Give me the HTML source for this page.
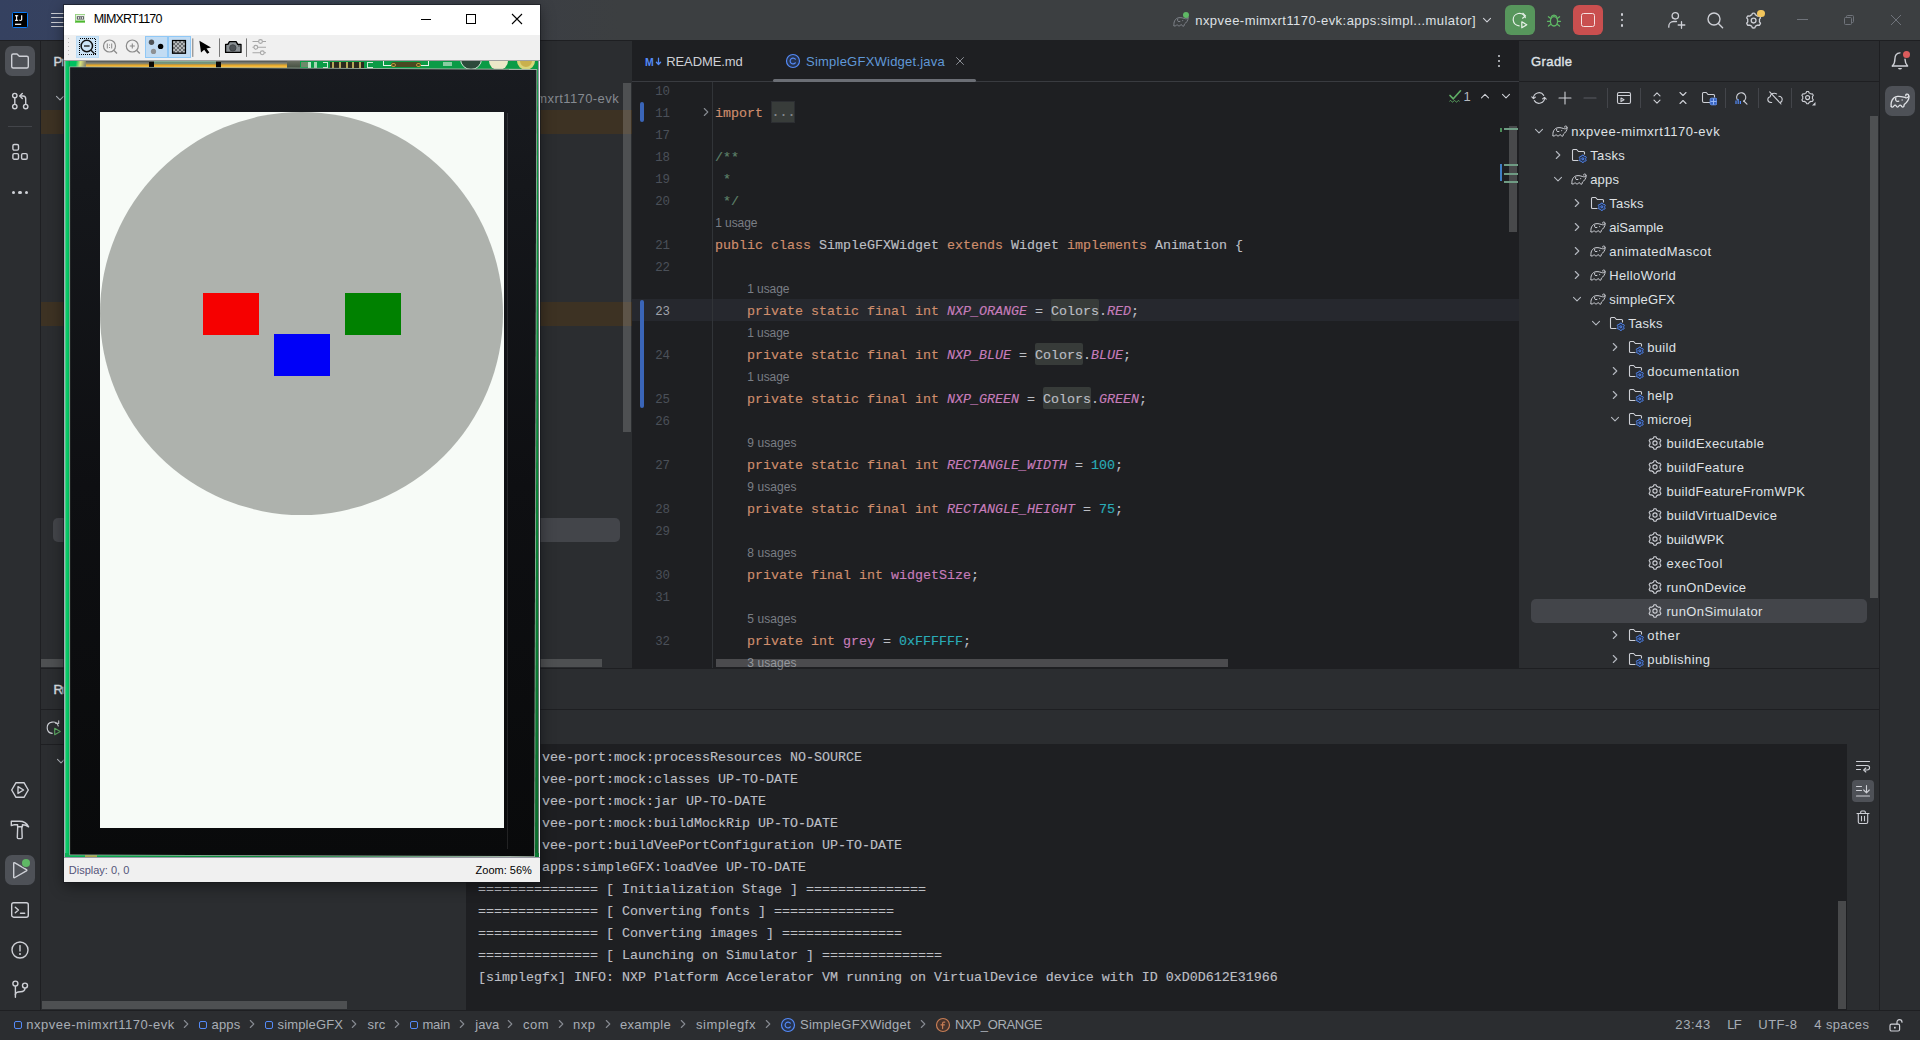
<!DOCTYPE html>
<html>
<head>
<meta charset="utf-8">
<title>IDE</title>
<style>
*{box-sizing:border-box;margin:0;padding:0}
html,body{width:1920px;height:1040px;overflow:hidden;background:#2b2d30;font-family:"Liberation Sans",sans-serif;font-size:13px;color:#dfe1e5}
.abs{position:absolute}
#root{position:absolute;left:0;top:0;width:1920px;height:1040px;overflow:hidden;background:#2b2d30}
/* top bar */
#topbar{left:0;top:0;width:1920px;height:40px;background:linear-gradient(90deg,#354160 0px,#37425e 120px,#39404f 360px,#3b3e44 520px,#3c3f41 620px,#3c3f41 1920px)}
#topline{left:0;top:40px;width:1920px;height:1px;background:#1e1f22}
/* left stripe */
#lstripe{left:0;top:41px;width:40px;height:969px;background:#2b2d30}
#lstripeb{left:40px;top:41px;width:1px;height:969px;background:#1e1f22}
/* right stripe */
#rstripe{left:1880px;top:41px;width:40px;height:969px;background:#2b2d30}
#rstripeb{left:1879px;top:41px;width:1px;height:969px;background:#1e1f22}
/* project panel */
#proj{left:41px;top:41px;width:591px;height:627px;background:#2b2d30}
/* editor */
#editor{left:632px;top:41px;width:887px;height:627px;background:#1e1f22;overflow:hidden}
/* gradle */
#gradle{left:1519px;top:41px;width:360px;height:627px;background:#2b2d30;overflow:hidden}
/* bottom */
#bottom{left:41px;top:668px;width:1838px;height:342px;background:#2b2d30;overflow:hidden}
#bottomtop{left:41px;top:668px;width:1838px;height:1px;background:#1e1f22}
/* status */
#status{left:0;top:1010px;width:1920px;height:30px;background:#2b2d30;border-top:1px solid #1e1f22}
.t{position:absolute;white-space:pre}
.mono{font-family:"Liberation Mono",monospace}
</style>
</head>
<body>
<div id="root">
<div id="topbar" class="abs"></div>
<div id="topline" class="abs"></div>
<div id="lstripe" class="abs"></div>
<div id="lstripeb" class="abs"></div>
<div id="proj" class="abs"></div>
<div id="editor" class="abs"></div>
<div id="gradle" class="abs"></div>
<div id="rstripe" class="abs"></div>
<div id="rstripeb" class="abs"></div>
<div id="bottom" class="abs"></div>
<div id="bottomtop" class="abs"></div>
<div id="status" class="abs"></div>
<div class="t" style="left:53.6px;top:52.7px;font-size:13px;line-height:17px;color:#dfe1e5;-webkit-text-stroke:0.4px #dfe1e5;">P</div>
<div class="t" style="left:61.6px;top:52.7px;font-size:13px;line-height:17px;color:#dfe1e5;-webkit-text-stroke:0.4px #dfe1e5;">roject</div>
<svg class="abs" style="left:52px;top:90px;" width="16" height="16" viewBox="0 0 16 16"><path d="M4.5 6.3L8 9.8L11.5 6.3" fill="none" stroke="#b4b8bf" stroke-width="1.1" stroke-linecap="round" stroke-linejoin="round"/></svg>
<div class="abs" style="left:41px;top:110px;width:591px;height:24px;background:#3d3223;"></div>
<div class="abs" style="left:41px;top:302px;width:591px;height:24px;background:#3d3223;"></div>
<div class="t" style="left:536.3px;top:89.9px;font-size:13px;line-height:17px;color:#868a91;letter-spacing:0.418px;">mxrt1170-evk</div>
<div class="abs" style="left:53px;top:518px;width:567px;height:24px;background:#43454a;border-radius:5px"></div>
<div class="abs" style="left:623px;top:83px;width:8px;height:349px;background:rgba(255,255,255,0.17);"></div>
<div class="abs" style="left:41px;top:659px;width:561px;height:8px;background:rgba(255,255,255,0.17);"></div>
<div class="t" style="left:53.6px;top:680.6px;font-size:13px;line-height:17px;color:#dfe1e5;-webkit-text-stroke:0.4px #dfe1e5;">R</div>
<div class="t" style="left:61.7px;top:680.6px;font-size:13px;line-height:17px;color:#dfe1e5;-webkit-text-stroke:0.4px #dfe1e5;">un</div>
<div class="abs" style="left:41px;top:709px;width:1838px;height:1px;background:#1e1f22;"></div>
<div class="abs" style="left:41px;top:744px;width:425px;height:1px;background:#1e1f22;"></div>
<svg class="abs" style="left:46px;top:719.5px;" width="16" height="16" viewBox="0 0 16 16"><g fill="none" stroke="#ced0d6" stroke-width="1.1" stroke-linecap="round" stroke-linejoin="round"><path d="M6.2 13.4A5.7 5.7 0 1 1 12.3 6"/><path d="M9.8 3.4H12.7V0.8"/></g><path d="M8.7 8.3L14.3 11.5L8.7 14.7Z" fill="none" stroke="#5fad65" stroke-width="1.1" stroke-linejoin="round"/></svg>
<svg class="abs" style="left:52.5px;top:753px;" width="16" height="16" viewBox="0 0 16 16"><path d="M4.5 6.3L8 9.8L11.5 6.3" fill="none" stroke="#b4b8bf" stroke-width="1.1" stroke-linecap="round" stroke-linejoin="round"/></svg>
<div class="abs" style="left:466px;top:744px;width:1381px;height:266px;background:#1e1f22;"></div>
<div class="t" style="left:478px;top:749.28px;font-size:13.33px;line-height:17px;color:#bcbec4;font-family:'Liberation Mono',monospace;-webkit-text-stroke:0.15px #bcbec4;">&gt; Task :vee-port:mock:processResources NO-SOURCE</div>
<div class="t" style="left:478px;top:771.28px;font-size:13.33px;line-height:17px;color:#bcbec4;font-family:'Liberation Mono',monospace;-webkit-text-stroke:0.15px #bcbec4;">&gt; Task :vee-port:mock:classes UP-TO-DATE</div>
<div class="t" style="left:478px;top:793.28px;font-size:13.33px;line-height:17px;color:#bcbec4;font-family:'Liberation Mono',monospace;-webkit-text-stroke:0.15px #bcbec4;">&gt; Task :vee-port:mock:jar UP-TO-DATE</div>
<div class="t" style="left:478px;top:815.28px;font-size:13.33px;line-height:17px;color:#bcbec4;font-family:'Liberation Mono',monospace;-webkit-text-stroke:0.15px #bcbec4;">&gt; Task :vee-port:mock:buildMockRip UP-TO-DATE</div>
<div class="t" style="left:478px;top:837.28px;font-size:13.33px;line-height:17px;color:#bcbec4;font-family:'Liberation Mono',monospace;-webkit-text-stroke:0.15px #bcbec4;">&gt; Task :vee-port:buildVeePortConfiguration UP-TO-DATE</div>
<div class="t" style="left:478px;top:859.28px;font-size:13.33px;line-height:17px;color:#bcbec4;font-family:'Liberation Mono',monospace;-webkit-text-stroke:0.15px #bcbec4;">&gt; Task :apps:simpleGFX:loadVee UP-TO-DATE</div>
<div class="t" style="left:478px;top:881.28px;font-size:13.33px;line-height:17px;color:#bcbec4;font-family:'Liberation Mono',monospace;-webkit-text-stroke:0.15px #bcbec4;">=============== [ Initialization Stage ] ===============</div>
<div class="t" style="left:478px;top:903.28px;font-size:13.33px;line-height:17px;color:#bcbec4;font-family:'Liberation Mono',monospace;-webkit-text-stroke:0.15px #bcbec4;">=============== [ Converting fonts ] ===============</div>
<div class="t" style="left:478px;top:925.28px;font-size:13.33px;line-height:17px;color:#bcbec4;font-family:'Liberation Mono',monospace;-webkit-text-stroke:0.15px #bcbec4;">=============== [ Converting images ] ===============</div>
<div class="t" style="left:478px;top:947.28px;font-size:13.33px;line-height:17px;color:#bcbec4;font-family:'Liberation Mono',monospace;-webkit-text-stroke:0.15px #bcbec4;">=============== [ Launching on Simulator ] ===============</div>
<div class="t" style="left:478px;top:969.28px;font-size:13.33px;line-height:17px;color:#bcbec4;font-family:'Liberation Mono',monospace;-webkit-text-stroke:0.15px #bcbec4;">[simplegfx] INFO: NXP Platform Accelerator VM running on VirtualDevice device with ID 0xD0D612E31966</div>
<div class="abs" style="left:1838px;top:901px;width:8px;height:108px;background:rgba(255,255,255,0.19);"></div>
<div class="abs" style="left:42px;top:1001px;width:304.5px;height:7.5px;background:rgba(255,255,255,0.17);"></div>
<svg class="abs" style="left:1855px;top:757.5px;" width="16" height="16" viewBox="0 0 16 16"><g fill="none" stroke="#ced0d6" stroke-width="1.1" stroke-linecap="round" stroke-linejoin="round"><path d="M1.5 3.5H14.5"/><path d="M1.5 7.5H12Q14.6 7.5 14.6 9.8Q14.6 12 12 12H9"/><path d="M10.8 10L8.8 12L10.8 14"/><path d="M1.5 11.5H5.5"/></g></svg>
<div class="abs" style="left:1852px;top:780px;width:22px;height:22px;background:#4e5157;border-radius:4px"></div>
<svg class="abs" style="left:1855px;top:783px;" width="16" height="16" viewBox="0 0 16 16"><g fill="none" stroke="#ced0d6" stroke-width="1.1" stroke-linecap="round" stroke-linejoin="round"><path d="M1.5 3.5H6.5M1.5 7.5H6.5M1.5 13H14.5"/><path d="M11.5 2.5V9.5M8.7 7L11.5 9.8L14.3 7"/></g></svg>
<svg class="abs" style="left:1855px;top:808.5px;" width="16" height="16" viewBox="0 0 16 16"><g fill="none" stroke="#ced0d6" stroke-width="1.1" stroke-linecap="round" stroke-linejoin="round"><path d="M2 4.5H14"/><path d="M5.7 4.3V3Q5.7 2 6.7 2H9.3Q10.3 2 10.3 3V4.3"/><path d="M3.3 4.7V13Q3.3 14.5 4.8 14.5H11.2Q12.7 14.5 12.7 13V4.7"/><path d="M6.5 7.2V11.8M9.5 7.2V11.8"/></g></svg>
<div class="abs" style="left:632px;top:81px;width:887px;height:1px;background:#393b40;"></div>
<div class="t" style="left:645px;top:54.86px;font-size:10.5px;line-height:14px;color:#548af7;font-weight:bold;">M</div>
<svg class="abs" style="left:654.5px;top:56px;" width="7" height="11" viewBox="0 0 7 11"><path d="M3.5 2.2V8.3M1.4 6.2L3.5 8.5L5.6 6.2" fill="none" stroke="#548af7" stroke-width="1.3" stroke-linecap="round" stroke-linejoin="round"/></svg>
<div class="t" style="left:666.2px;top:52.7px;font-size:13px;line-height:17px;color:#ced0d6;letter-spacing:-0.088px;">README.md</div>
<svg class="abs" style="left:785px;top:53px;" width="16" height="16" viewBox="0 0 16 16"><circle cx="8" cy="8" r="6.5" fill="#25324d" stroke="#548af7" stroke-width="1.2"/><path d="M10.3 6.2A2.9 2.9 0 1 0 10.3 9.8" fill="none" stroke="#548af7" stroke-width="1.2" stroke-linecap="round"/></svg>
<div class="t" style="left:806px;top:52.7px;font-size:13px;line-height:17px;color:#6098d8;letter-spacing:0.231px;">SimpleGFXWidget.java</div>
<svg class="abs" style="left:953px;top:54px;" width="14" height="14" viewBox="0 0 14 14"><path d="M3.5 3.5L10.5 10.5M10.5 3.5L3.5 10.5" stroke="#8b8e95" stroke-width="1" fill="none" stroke-linecap="round"/></svg>
<div class="abs" style="left:773px;top:78.6px;width:203px;height:3px;background:#6b6e75;border-radius:1.5px"></div>
<div class="abs" style="left:1497.8px;top:55px;width:2.4px;height:2.4px;border-radius:50%;background:#ced0d6"></div>
<div class="abs" style="left:1497.8px;top:60px;width:2.4px;height:2.4px;border-radius:50%;background:#ced0d6"></div>
<div class="abs" style="left:1497.8px;top:65px;width:2.4px;height:2.4px;border-radius:50%;background:#ced0d6"></div>
<div class="abs" style="left:632px;top:299px;width:887px;height:22px;background:#26282e;"></div>
<div class="abs" style="left:712px;top:82px;width:1px;height:586px;background:#313438;"></div>
<div class="abs" style="left:640.2px;top:102px;width:3.9px;height:20px;background:#3a65b8;border-radius:2px"></div>
<div class="abs" style="left:640.2px;top:300px;width:3.9px;height:108px;background:#3a65b8;border-radius:2px"></div>
<svg class="abs" style="left:697.8px;top:104.4px;" width="16" height="16" viewBox="0 0 16 16"><path d="M6.3 4.5L9.8 8L6.3 11.5" fill="none" stroke="#868a91" stroke-width="1.1" stroke-linecap="round" stroke-linejoin="round"/></svg>
<div class="t" style="left:655.2px;top:84.1px;font-size:12.4px;line-height:16px;color:#4b5059;font-family:'Liberation Mono',monospace;">10</div>
<div class="t" style="left:655.2px;top:106.1px;font-size:12.4px;line-height:16px;color:#4b5059;font-family:'Liberation Mono',monospace;">11</div>
<div class="t" style="left:655.2px;top:128.1px;font-size:12.4px;line-height:16px;color:#4b5059;font-family:'Liberation Mono',monospace;">17</div>
<div class="t" style="left:655.2px;top:150.1px;font-size:12.4px;line-height:16px;color:#4b5059;font-family:'Liberation Mono',monospace;">18</div>
<div class="t" style="left:655.2px;top:172.1px;font-size:12.4px;line-height:16px;color:#4b5059;font-family:'Liberation Mono',monospace;">19</div>
<div class="t" style="left:655.2px;top:194.1px;font-size:12.4px;line-height:16px;color:#4b5059;font-family:'Liberation Mono',monospace;">20</div>
<div class="t" style="left:655.2px;top:238.1px;font-size:12.4px;line-height:16px;color:#4b5059;font-family:'Liberation Mono',monospace;">21</div>
<div class="t" style="left:655.2px;top:260.1px;font-size:12.4px;line-height:16px;color:#4b5059;font-family:'Liberation Mono',monospace;">22</div>
<div class="t" style="left:655.2px;top:304.1px;font-size:12.4px;line-height:16px;color:#a1a3ab;font-family:'Liberation Mono',monospace;">23</div>
<div class="t" style="left:655.2px;top:348.1px;font-size:12.4px;line-height:16px;color:#4b5059;font-family:'Liberation Mono',monospace;">24</div>
<div class="t" style="left:655.2px;top:392.1px;font-size:12.4px;line-height:16px;color:#4b5059;font-family:'Liberation Mono',monospace;">25</div>
<div class="t" style="left:655.2px;top:414.1px;font-size:12.4px;line-height:16px;color:#4b5059;font-family:'Liberation Mono',monospace;">26</div>
<div class="t" style="left:655.2px;top:458.1px;font-size:12.4px;line-height:16px;color:#4b5059;font-family:'Liberation Mono',monospace;">27</div>
<div class="t" style="left:655.2px;top:502.1px;font-size:12.4px;line-height:16px;color:#4b5059;font-family:'Liberation Mono',monospace;">28</div>
<div class="t" style="left:655.2px;top:524.1px;font-size:12.4px;line-height:16px;color:#4b5059;font-family:'Liberation Mono',monospace;">29</div>
<div class="t" style="left:655.2px;top:568.1px;font-size:12.4px;line-height:16px;color:#4b5059;font-family:'Liberation Mono',monospace;">30</div>
<div class="t" style="left:655.2px;top:590.1px;font-size:12.4px;line-height:16px;color:#4b5059;font-family:'Liberation Mono',monospace;">31</div>
<div class="t" style="left:655.2px;top:634.1px;font-size:12.4px;line-height:16px;color:#4b5059;font-family:'Liberation Mono',monospace;">32</div>
<div class="t" style="left:715.3px;top:215.14px;font-size:12px;line-height:16px;color:#7a7e85;letter-spacing:-0.101px;">1 usage</div>
<div class="t" style="left:747.3px;top:281.14px;font-size:12px;line-height:16px;color:#7a7e85;letter-spacing:-0.101px;">1 usage</div>
<div class="t" style="left:747.3px;top:325.14px;font-size:12px;line-height:16px;color:#7a7e85;letter-spacing:-0.101px;">1 usage</div>
<div class="t" style="left:747.3px;top:369.14px;font-size:12px;line-height:16px;color:#7a7e85;letter-spacing:-0.101px;">1 usage</div>
<div class="t" style="left:747.3px;top:435.14px;font-size:12px;line-height:16px;color:#7a7e85;letter-spacing:0.087px;">9 usages</div>
<div class="t" style="left:747.3px;top:479.14px;font-size:12px;line-height:16px;color:#7a7e85;letter-spacing:0.087px;">9 usages</div>
<div class="t" style="left:747.3px;top:545.14px;font-size:12px;line-height:16px;color:#7a7e85;letter-spacing:0.087px;">8 usages</div>
<div class="t" style="left:747.3px;top:611.14px;font-size:12px;line-height:16px;color:#7a7e85;letter-spacing:0.087px;">5 usages</div>
<div class="t" style="left:747.3px;top:655.14px;font-size:12px;line-height:16px;color:#7a7e85;letter-spacing:0.087px;">3 usages</div>
<div class="t" style="left:715px;top:104.88px;font-size:13.33px;line-height:17px;color:#cf8e6d;font-family:'Liberation Mono',monospace;-webkit-text-stroke:0.15px #cf8e6d;">import</div>
<div class="abs" style="left:771px;top:101px;width:24px;height:21.5px;background:#383c3a;border:1px solid #2c2e32"></div>
<div class="t" style="left:771.5px;top:104.48px;font-size:13.33px;line-height:17px;color:#868a91;font-family:'Liberation Mono',monospace;-webkit-text-stroke:0.15px #868a91;">...</div>
<div class="t" style="left:715px;top:148.88px;font-size:13.33px;line-height:17px;color:#5f826b;font-family:'Liberation Mono',monospace;-webkit-text-stroke:0.15px #5f826b;">/**</div>
<div class="t" style="left:723px;top:170.88px;font-size:13.33px;line-height:17px;color:#5f826b;font-family:'Liberation Mono',monospace;-webkit-text-stroke:0.15px #5f826b;">*</div>
<div class="t" style="left:723px;top:192.88px;font-size:13.33px;line-height:17px;color:#5f826b;font-family:'Liberation Mono',monospace;-webkit-text-stroke:0.15px #5f826b;">*/</div>
<div class="t" style="left:715px;top:236.88px;font-size:13.33px;line-height:17px;color:#cf8e6d;font-family:'Liberation Mono',monospace;-webkit-text-stroke:0.15px #cf8e6d;">public</div>
<div class="t" style="left:771px;top:236.88px;font-size:13.33px;line-height:17px;color:#cf8e6d;font-family:'Liberation Mono',monospace;-webkit-text-stroke:0.15px #cf8e6d;">class</div>
<div class="t" style="left:819px;top:236.88px;font-size:13.33px;line-height:17px;color:#bcbec4;font-family:'Liberation Mono',monospace;-webkit-text-stroke:0.15px #bcbec4;">SimpleGFXWidget</div>
<div class="t" style="left:947px;top:236.88px;font-size:13.33px;line-height:17px;color:#cf8e6d;font-family:'Liberation Mono',monospace;-webkit-text-stroke:0.15px #cf8e6d;">extends</div>
<div class="t" style="left:1011px;top:236.88px;font-size:13.33px;line-height:17px;color:#bcbec4;font-family:'Liberation Mono',monospace;-webkit-text-stroke:0.15px #bcbec4;">Widget</div>
<div class="t" style="left:1067px;top:236.88px;font-size:13.33px;line-height:17px;color:#cf8e6d;font-family:'Liberation Mono',monospace;-webkit-text-stroke:0.15px #cf8e6d;">implements</div>
<div class="t" style="left:1155px;top:236.88px;font-size:13.33px;line-height:17px;color:#bcbec4;font-family:'Liberation Mono',monospace;-webkit-text-stroke:0.15px #bcbec4;">Animation {</div>
<div class="t" style="left:747px;top:302.88px;font-size:13.33px;line-height:17px;color:#cf8e6d;font-family:'Liberation Mono',monospace;-webkit-text-stroke:0.15px #cf8e6d;">private</div>
<div class="t" style="left:811px;top:302.88px;font-size:13.33px;line-height:17px;color:#cf8e6d;font-family:'Liberation Mono',monospace;-webkit-text-stroke:0.15px #cf8e6d;">static</div>
<div class="t" style="left:867px;top:302.88px;font-size:13.33px;line-height:17px;color:#cf8e6d;font-family:'Liberation Mono',monospace;-webkit-text-stroke:0.15px #cf8e6d;">final</div>
<div class="t" style="left:915px;top:302.88px;font-size:13.33px;line-height:17px;color:#cf8e6d;font-family:'Liberation Mono',monospace;-webkit-text-stroke:0.15px #cf8e6d;">int</div>
<div class="t" style="left:947px;top:302.88px;font-size:13.33px;line-height:17px;color:#c77dbb;font-family:'Liberation Mono',monospace;-webkit-text-stroke:0.15px #c77dbb;font-style:italic;">NXP_ORANGE</div>
<div class="t" style="left:1035px;top:302.88px;font-size:13.33px;line-height:17px;color:#bcbec4;font-family:'Liberation Mono',monospace;-webkit-text-stroke:0.15px #bcbec4;">=</div>
<div class="abs" style="left:1051px;top:299px;width:48px;height:22px;background:#373b39;border-radius:2px"></div>
<div class="t" style="left:1051px;top:302.88px;font-size:13.33px;line-height:17px;color:#bcbec4;font-family:'Liberation Mono',monospace;-webkit-text-stroke:0.15px #bcbec4;">Colors</div>
<div class="t" style="left:1099px;top:302.88px;font-size:13.33px;line-height:17px;color:#bcbec4;font-family:'Liberation Mono',monospace;-webkit-text-stroke:0.15px #bcbec4;">.</div>
<div class="t" style="left:1107px;top:302.88px;font-size:13.33px;line-height:17px;color:#c77dbb;font-family:'Liberation Mono',monospace;-webkit-text-stroke:0.15px #c77dbb;font-style:italic;">RED</div>
<div class="t" style="left:1131px;top:302.88px;font-size:13.33px;line-height:17px;color:#bcbec4;font-family:'Liberation Mono',monospace;-webkit-text-stroke:0.15px #bcbec4;">;</div>
<div class="t" style="left:747px;top:346.88px;font-size:13.33px;line-height:17px;color:#cf8e6d;font-family:'Liberation Mono',monospace;-webkit-text-stroke:0.15px #cf8e6d;">private</div>
<div class="t" style="left:811px;top:346.88px;font-size:13.33px;line-height:17px;color:#cf8e6d;font-family:'Liberation Mono',monospace;-webkit-text-stroke:0.15px #cf8e6d;">static</div>
<div class="t" style="left:867px;top:346.88px;font-size:13.33px;line-height:17px;color:#cf8e6d;font-family:'Liberation Mono',monospace;-webkit-text-stroke:0.15px #cf8e6d;">final</div>
<div class="t" style="left:915px;top:346.88px;font-size:13.33px;line-height:17px;color:#cf8e6d;font-family:'Liberation Mono',monospace;-webkit-text-stroke:0.15px #cf8e6d;">int</div>
<div class="t" style="left:947px;top:346.88px;font-size:13.33px;line-height:17px;color:#c77dbb;font-family:'Liberation Mono',monospace;-webkit-text-stroke:0.15px #c77dbb;font-style:italic;">NXP_BLUE</div>
<div class="t" style="left:1019px;top:346.88px;font-size:13.33px;line-height:17px;color:#bcbec4;font-family:'Liberation Mono',monospace;-webkit-text-stroke:0.15px #bcbec4;">=</div>
<div class="abs" style="left:1035px;top:343px;width:48px;height:22px;background:#373b39;border-radius:2px"></div>
<div class="t" style="left:1035px;top:346.88px;font-size:13.33px;line-height:17px;color:#bcbec4;font-family:'Liberation Mono',monospace;-webkit-text-stroke:0.15px #bcbec4;">Colors</div>
<div class="t" style="left:1083px;top:346.88px;font-size:13.33px;line-height:17px;color:#bcbec4;font-family:'Liberation Mono',monospace;-webkit-text-stroke:0.15px #bcbec4;">.</div>
<div class="t" style="left:1091px;top:346.88px;font-size:13.33px;line-height:17px;color:#c77dbb;font-family:'Liberation Mono',monospace;-webkit-text-stroke:0.15px #c77dbb;font-style:italic;">BLUE</div>
<div class="t" style="left:1123px;top:346.88px;font-size:13.33px;line-height:17px;color:#bcbec4;font-family:'Liberation Mono',monospace;-webkit-text-stroke:0.15px #bcbec4;">;</div>
<div class="t" style="left:747px;top:390.88px;font-size:13.33px;line-height:17px;color:#cf8e6d;font-family:'Liberation Mono',monospace;-webkit-text-stroke:0.15px #cf8e6d;">private</div>
<div class="t" style="left:811px;top:390.88px;font-size:13.33px;line-height:17px;color:#cf8e6d;font-family:'Liberation Mono',monospace;-webkit-text-stroke:0.15px #cf8e6d;">static</div>
<div class="t" style="left:867px;top:390.88px;font-size:13.33px;line-height:17px;color:#cf8e6d;font-family:'Liberation Mono',monospace;-webkit-text-stroke:0.15px #cf8e6d;">final</div>
<div class="t" style="left:915px;top:390.88px;font-size:13.33px;line-height:17px;color:#cf8e6d;font-family:'Liberation Mono',monospace;-webkit-text-stroke:0.15px #cf8e6d;">int</div>
<div class="t" style="left:947px;top:390.88px;font-size:13.33px;line-height:17px;color:#c77dbb;font-family:'Liberation Mono',monospace;-webkit-text-stroke:0.15px #c77dbb;font-style:italic;">NXP_GREEN</div>
<div class="t" style="left:1027px;top:390.88px;font-size:13.33px;line-height:17px;color:#bcbec4;font-family:'Liberation Mono',monospace;-webkit-text-stroke:0.15px #bcbec4;">=</div>
<div class="abs" style="left:1043px;top:387px;width:48px;height:22px;background:#373b39;border-radius:2px"></div>
<div class="t" style="left:1043px;top:390.88px;font-size:13.33px;line-height:17px;color:#bcbec4;font-family:'Liberation Mono',monospace;-webkit-text-stroke:0.15px #bcbec4;">Colors</div>
<div class="t" style="left:1091px;top:390.88px;font-size:13.33px;line-height:17px;color:#bcbec4;font-family:'Liberation Mono',monospace;-webkit-text-stroke:0.15px #bcbec4;">.</div>
<div class="t" style="left:1099px;top:390.88px;font-size:13.33px;line-height:17px;color:#c77dbb;font-family:'Liberation Mono',monospace;-webkit-text-stroke:0.15px #c77dbb;font-style:italic;">GREEN</div>
<div class="t" style="left:1139px;top:390.88px;font-size:13.33px;line-height:17px;color:#bcbec4;font-family:'Liberation Mono',monospace;-webkit-text-stroke:0.15px #bcbec4;">;</div>
<div class="t" style="left:747px;top:456.88px;font-size:13.33px;line-height:17px;color:#cf8e6d;font-family:'Liberation Mono',monospace;-webkit-text-stroke:0.15px #cf8e6d;">private</div>
<div class="t" style="left:811px;top:456.88px;font-size:13.33px;line-height:17px;color:#cf8e6d;font-family:'Liberation Mono',monospace;-webkit-text-stroke:0.15px #cf8e6d;">static</div>
<div class="t" style="left:867px;top:456.88px;font-size:13.33px;line-height:17px;color:#cf8e6d;font-family:'Liberation Mono',monospace;-webkit-text-stroke:0.15px #cf8e6d;">final</div>
<div class="t" style="left:915px;top:456.88px;font-size:13.33px;line-height:17px;color:#cf8e6d;font-family:'Liberation Mono',monospace;-webkit-text-stroke:0.15px #cf8e6d;">int</div>
<div class="t" style="left:947px;top:456.88px;font-size:13.33px;line-height:17px;color:#c77dbb;font-family:'Liberation Mono',monospace;-webkit-text-stroke:0.15px #c77dbb;font-style:italic;">RECTANGLE_WIDTH</div>
<div class="t" style="left:1075px;top:456.88px;font-size:13.33px;line-height:17px;color:#bcbec4;font-family:'Liberation Mono',monospace;-webkit-text-stroke:0.15px #bcbec4;">=</div>
<div class="t" style="left:1091px;top:456.88px;font-size:13.33px;line-height:17px;color:#2aacb8;font-family:'Liberation Mono',monospace;-webkit-text-stroke:0.15px #2aacb8;">100</div>
<div class="t" style="left:1115px;top:456.88px;font-size:13.33px;line-height:17px;color:#bcbec4;font-family:'Liberation Mono',monospace;-webkit-text-stroke:0.15px #bcbec4;">;</div>
<div class="t" style="left:747px;top:500.88px;font-size:13.33px;line-height:17px;color:#cf8e6d;font-family:'Liberation Mono',monospace;-webkit-text-stroke:0.15px #cf8e6d;">private</div>
<div class="t" style="left:811px;top:500.88px;font-size:13.33px;line-height:17px;color:#cf8e6d;font-family:'Liberation Mono',monospace;-webkit-text-stroke:0.15px #cf8e6d;">static</div>
<div class="t" style="left:867px;top:500.88px;font-size:13.33px;line-height:17px;color:#cf8e6d;font-family:'Liberation Mono',monospace;-webkit-text-stroke:0.15px #cf8e6d;">final</div>
<div class="t" style="left:915px;top:500.88px;font-size:13.33px;line-height:17px;color:#cf8e6d;font-family:'Liberation Mono',monospace;-webkit-text-stroke:0.15px #cf8e6d;">int</div>
<div class="t" style="left:947px;top:500.88px;font-size:13.33px;line-height:17px;color:#c77dbb;font-family:'Liberation Mono',monospace;-webkit-text-stroke:0.15px #c77dbb;font-style:italic;">RECTANGLE_HEIGHT</div>
<div class="t" style="left:1083px;top:500.88px;font-size:13.33px;line-height:17px;color:#bcbec4;font-family:'Liberation Mono',monospace;-webkit-text-stroke:0.15px #bcbec4;">=</div>
<div class="t" style="left:1099px;top:500.88px;font-size:13.33px;line-height:17px;color:#2aacb8;font-family:'Liberation Mono',monospace;-webkit-text-stroke:0.15px #2aacb8;">75</div>
<div class="t" style="left:1115px;top:500.88px;font-size:13.33px;line-height:17px;color:#bcbec4;font-family:'Liberation Mono',monospace;-webkit-text-stroke:0.15px #bcbec4;">;</div>
<div class="t" style="left:747px;top:566.88px;font-size:13.33px;line-height:17px;color:#cf8e6d;font-family:'Liberation Mono',monospace;-webkit-text-stroke:0.15px #cf8e6d;">private</div>
<div class="t" style="left:811px;top:566.88px;font-size:13.33px;line-height:17px;color:#cf8e6d;font-family:'Liberation Mono',monospace;-webkit-text-stroke:0.15px #cf8e6d;">final</div>
<div class="t" style="left:859px;top:566.88px;font-size:13.33px;line-height:17px;color:#cf8e6d;font-family:'Liberation Mono',monospace;-webkit-text-stroke:0.15px #cf8e6d;">int</div>
<div class="t" style="left:891px;top:566.88px;font-size:13.33px;line-height:17px;color:#c77dbb;font-family:'Liberation Mono',monospace;-webkit-text-stroke:0.15px #c77dbb;">widgetSize</div>
<div class="t" style="left:971px;top:566.88px;font-size:13.33px;line-height:17px;color:#bcbec4;font-family:'Liberation Mono',monospace;-webkit-text-stroke:0.15px #bcbec4;">;</div>
<div class="t" style="left:747px;top:632.88px;font-size:13.33px;line-height:17px;color:#cf8e6d;font-family:'Liberation Mono',monospace;-webkit-text-stroke:0.15px #cf8e6d;">private</div>
<div class="t" style="left:811px;top:632.88px;font-size:13.33px;line-height:17px;color:#cf8e6d;font-family:'Liberation Mono',monospace;-webkit-text-stroke:0.15px #cf8e6d;">int</div>
<div class="t" style="left:843px;top:632.88px;font-size:13.33px;line-height:17px;color:#c77dbb;font-family:'Liberation Mono',monospace;-webkit-text-stroke:0.15px #c77dbb;">grey</div>
<div class="t" style="left:883px;top:632.88px;font-size:13.33px;line-height:17px;color:#bcbec4;font-family:'Liberation Mono',monospace;-webkit-text-stroke:0.15px #bcbec4;">=</div>
<div class="t" style="left:899px;top:632.88px;font-size:13.33px;line-height:17px;color:#2aacb8;font-family:'Liberation Mono',monospace;-webkit-text-stroke:0.15px #2aacb8;">0xFFFFFF</div>
<div class="t" style="left:963px;top:632.88px;font-size:13.33px;line-height:17px;color:#bcbec4;font-family:'Liberation Mono',monospace;-webkit-text-stroke:0.15px #bcbec4;">;</div>
<svg class="abs" style="left:1448px;top:88px;" width="16" height="16" viewBox="0 0 16 16"><path d="M2 7.5L5.3 10.8L12.5 2.8" fill="none" stroke="#5fad65" stroke-width="1.7" stroke-linecap="round" stroke-linejoin="round"/><path d="M1.5 13.3q1 -1.5 2 0t2 0t2 0t2 0t2 0" fill="none" stroke="#5fad65" stroke-width="1"/></svg>
<div class="t" style="left:1463.5px;top:87.8px;font-size:13px;line-height:17px;color:#b4b8bf;">1</div>
<svg class="abs" style="left:1477px;top:88px;" width="16" height="16" viewBox="0 0 16 16"><path d="M4.5 9.8L8 6.3L11.5 9.8" fill="none" stroke="#ced0d6" stroke-width="1.1" stroke-linecap="round" stroke-linejoin="round"/></svg>
<svg class="abs" style="left:1498px;top:88px;" width="16" height="16" viewBox="0 0 16 16"><path d="M4.5 6.3L8 9.8L11.5 6.3" fill="none" stroke="#ced0d6" stroke-width="1.1" stroke-linecap="round" stroke-linejoin="round"/></svg>
<div class="abs" style="left:1509px;top:126px;width:8px;height:106px;background:rgba(255,255,255,0.19);"></div>
<div class="abs" style="left:1500px;top:127.5px;width:2px;height:4px;background:#4c8f5a;"></div>
<div class="abs" style="left:1504px;top:128.3px;width:14px;height:2px;background:#6f9c84;"></div>
<div class="abs" style="left:1500px;top:164px;width:2px;height:17px;background:#3f7fc4;"></div>
<div class="abs" style="left:1504px;top:163.9px;width:14px;height:2px;background:#6f9c84;"></div>
<div class="abs" style="left:1504px;top:172.8px;width:14px;height:2px;background:#6f9c84;"></div>
<div class="abs" style="left:1504px;top:180.9px;width:14px;height:2px;background:#6f9c84;"></div>
<div class="abs" style="left:716px;top:659px;width:512px;height:8px;background:rgba(255,255,255,0.2);"></div>
<div class="t" style="left:1531px;top:52.7px;font-size:13px;line-height:17px;color:#dfe1e5;letter-spacing:0.413px;-webkit-text-stroke:0.4px #dfe1e5;">Gradle</div>
<div class="abs" style="left:1519px;top:81px;width:360px;height:1px;background:#1e1f22;"></div>
<svg class="abs" style="left:1531px;top:90px;" width="16" height="16" viewBox="0 0 16 16"><g fill="none" stroke="#ced0d6" stroke-width="1.1" stroke-linecap="round" stroke-linejoin="round"><path d="M2.5 8.5A5.5 5.5 0 0 1 12.7 5.4"/><path d="M0.8 6.8L2.5 8.7L4.4 7.1"/><path d="M13.5 7.5A5.5 5.5 0 0 1 3.3 10.6"/><path d="M11.6 8.9L13.5 7.3L15.2 9.2"/></g></svg>
<svg class="abs" style="left:1557px;top:90px;" width="16" height="16" viewBox="0 0 16 16"><path d="M8 2V14M2 8H14" fill="none" stroke="#ced0d6" stroke-width="1.1" stroke-linecap="round" stroke-linejoin="round"/></svg>
<svg class="abs" style="left:1582px;top:90px;" width="16" height="16" viewBox="0 0 16 16"><path d="M2 8H14" fill="none" stroke="#5a5d63" stroke-width="1.1" stroke-linecap="round"/></svg>
<div class="abs" style="left:1607px;top:88px;width:1px;height:20px;background:#43454a;"></div>
<div class="abs" style="left:1640px;top:88px;width:1px;height:20px;background:#43454a;"></div>
<div class="abs" style="left:1725px;top:88px;width:1px;height:20px;background:#43454a;"></div>
<div class="abs" style="left:1758px;top:88px;width:1px;height:20px;background:#43454a;"></div>
<div class="abs" style="left:1791px;top:88px;width:1px;height:20px;background:#43454a;"></div>
<svg class="abs" style="left:1616px;top:90px;" width="16" height="16" viewBox="0 0 16 16"><g fill="none" stroke="#ced0d6" stroke-width="1.1" stroke-linecap="round" stroke-linejoin="round"><rect x="1.5" y="2.5" width="13" height="11" rx="1.5"/><path d="M1.5 5.5H14.5"/><path d="M5 8L8 9.8L5 11.6Z"/></g></svg>
<svg class="abs" style="left:1649px;top:90px;" width="16" height="16" viewBox="0 0 16 16"><path d="M5 5.8L8 2.8L11 5.8M5 10.2L8 13.2L11 10.2" fill="none" stroke="#ced0d6" stroke-width="1.1" stroke-linecap="round" stroke-linejoin="round"/></svg>
<svg class="abs" style="left:1675px;top:90px;" width="16" height="16" viewBox="0 0 16 16"><path d="M5 2.5L8 5.5L11 2.5M5 13.5L8 10.5L11 13.5" fill="none" stroke="#ced0d6" stroke-width="1.1" stroke-linecap="round" stroke-linejoin="round"/></svg>
<svg class="abs" style="left:1701px;top:90px;" width="16" height="16" viewBox="0 0 16 16"><path d="M8.5 12.5H3Q1.5 12.5 1.5 11V3.5Q1.5 2.5 2.5 2.5H5.3L7 4.5H12.5Q13.5 4.5 13.5 5.5V7" fill="none" stroke="#ced0d6" stroke-width="1.1" stroke-linecap="round" stroke-linejoin="round"/><rect x="9.2" y="8.2" width="6.6" height="6.6" rx="1.3" fill="#3a66c4" stroke="#6b9bfa" stroke-width="0.9"/><path d="M12.5 8.5V14.5M9.5 11.5H15.5" stroke="#9dbdfb" stroke-width="0.9"/></svg>
<svg class="abs" style="left:1733px;top:90px;" width="16" height="16" viewBox="0 0 16 16"><g fill="none" stroke="#ced0d6" stroke-width="1.1" stroke-linecap="round" stroke-linejoin="round"><path d="M10.6 11.3A4.6 4.6 0 1 0 4.3 9.8"/><path d="M10.8 11L14 14.2"/></g><path d="M3 14V10.5M5.2 14V9M7.4 14V11" stroke="#548af7" stroke-width="1.2" fill="none"/></svg>
<svg class="abs" style="left:1767px;top:90px;" width="16" height="16" viewBox="0 0 16 16"><g fill="none" stroke="#ced0d6" stroke-width="1.1" stroke-linecap="round" stroke-linejoin="round"><path d="M4.7 12.5H4Q0.8 12.3 0.8 9.5Q0.9 7.1 3.2 6.7Q3.6 3.2 7.3 3.2Q8.6 3.2 9.6 3.9"/><path d="M11.8 6.3Q15.2 6.6 15.2 9.6Q15.2 11.9 13.4 12.4"/><path d="M2.7 1.8L14 14"/></g></svg>
<svg class="abs" style="left:1800px;top:90px;" width="16" height="16" viewBox="0 0 16 16"><path d="M6.65 1.58A6.1 6.1 0 0 1 8.55 1.58L9.16 2.97A4.88 4.88 0 0 1 10.83 3.94L12.34 3.76A6.1 6.1 0 0 1 13.29 5.41L12.38 6.64A4.88 4.88 0 0 1 12.38 8.56L13.29 9.79A6.1 6.1 0 0 1 12.34 11.44L10.83 11.26A4.88 4.88 0 0 1 9.16 12.23L8.55 13.62A6.1 6.1 0 0 1 6.65 13.62L6.04 12.23A4.88 4.88 0 0 1 4.37 11.26L2.86 11.44A6.1 6.1 0 0 1 1.91 9.79L2.82 8.56A4.88 4.88 0 0 1 2.82 6.64L1.91 5.41A6.1 6.1 0 0 1 2.86 3.76L4.37 3.94A4.88 4.88 0 0 1 6.04 2.97Z" fill="none" stroke="#ced0d6" stroke-width="1.1" stroke-linejoin="round"/><circle cx="7.6" cy="7.6" r="2" fill="none" stroke="#ced0d6" stroke-width="1.1"/><path d="M15.5 12V15.5H12Z" fill="#ced0d6"/></svg>
<svg class="abs" style="left:1531.2px;top:123px;" width="16" height="16" viewBox="0 0 16 16"><path d="M4.5 6.3L8 9.8L11.5 6.3" fill="none" stroke="#b4b8bf" stroke-width="1.1" stroke-linecap="round" stroke-linejoin="round"/></svg>
<svg class="abs" style="left:1551.9px;top:124.8px;" width="16" height="12" viewBox="0 0 16 12"><g fill="none" stroke="#ced0d6" stroke-width="1" stroke-linecap="round" stroke-linejoin="round"><path d="M1 10.8C0.4 7.3 1.8 3.3 6 2.7C8.8 2.3 11 3.5 12.6 3.8C14.6 4.1 15.4 2.6 14.7 1.4C14 0.4 12.3 0.9 12.7 2.2"/><path d="M15.2 2.6C15.4 5.6 13 7.8 11.4 9.2L11 10.9C10.2 11.6 9.4 11.2 9 10.2C8.3 9.3 7.6 9.6 7.1 10.4C6.5 11.5 5.5 11.5 5 10.4C4.5 9.5 3.7 9.5 3.1 10.4C2.5 11.4 1.5 11.6 1 10.8"/><path d="M4.6 4.2C4.1 6 5.2 7.3 7 6.5"/></g><circle cx="9.7" cy="5.6" r="0.55" fill="#ced0d6"/></svg>
<div class="t" style="left:1571.2px;top:122.9px;font-size:13px;line-height:17px;color:#dfe1e5;letter-spacing:0.535px;">nxpvee-mimxrt1170-evk</div>
<svg class="abs" style="left:1549.7px;top:147px;" width="16" height="16" viewBox="0 0 16 16"><path d="M6.3 4.5L9.8 8L6.3 11.5" fill="none" stroke="#b4b8bf" stroke-width="1.1" stroke-linecap="round" stroke-linejoin="round"/></svg>
<svg class="abs" style="left:1570.6px;top:147.4px;" width="16" height="16" viewBox="0 0 16 16"><path d="M1.5 12.5V3.5Q1.5 2.5 2.5 2.5H5.6L7.4 4.5H12.5Q13.5 4.5 13.5 5.5V7" fill="none" stroke="#ced0d6" stroke-width="1.1" stroke-linejoin="round" stroke-linecap="round"/><path d="M1.5 12.5Q1.5 13.5 2.5 13.5H7" fill="none" stroke="#ced0d6" stroke-width="1.1" stroke-linecap="round"/><path d="M11.22 8.15A3.7 3.7 0 0 1 12.38 8.15L12.74 8.99A2.96 2.96 0 0 1 13.76 9.58L14.68 9.47A3.7 3.7 0 0 1 15.25 10.47L14.7 11.21A2.96 2.96 0 0 1 14.7 12.39L15.25 13.13A3.7 3.7 0 0 1 14.68 14.13L13.76 14.02A2.96 2.96 0 0 1 12.74 14.61L12.38 15.45A3.7 3.7 0 0 1 11.22 15.45L10.86 14.61A2.96 2.96 0 0 1 9.84 14.02L8.92 14.13A3.7 3.7 0 0 1 8.35 13.13L8.9 12.39A2.96 2.96 0 0 1 8.9 11.21L8.35 10.47A3.7 3.7 0 0 1 8.92 9.47L9.84 9.58A2.96 2.96 0 0 1 10.86 8.99Z" fill="#25324d" stroke="#548af7" stroke-width="1" stroke-linejoin="round"/><circle cx="11.8" cy="11.8" r="1" fill="none" stroke="#548af7" stroke-width="1"/></svg>
<div class="t" style="left:1590.2px;top:146.9px;font-size:13px;line-height:17px;color:#dfe1e5;letter-spacing:0.354px;">Tasks</div>
<svg class="abs" style="left:1550.2px;top:171px;" width="16" height="16" viewBox="0 0 16 16"><path d="M4.5 6.3L8 9.8L11.5 6.3" fill="none" stroke="#b4b8bf" stroke-width="1.1" stroke-linecap="round" stroke-linejoin="round"/></svg>
<svg class="abs" style="left:1570.9px;top:172.8px;" width="16" height="12" viewBox="0 0 16 12"><g fill="none" stroke="#ced0d6" stroke-width="1" stroke-linecap="round" stroke-linejoin="round"><path d="M1 10.8C0.4 7.3 1.8 3.3 6 2.7C8.8 2.3 11 3.5 12.6 3.8C14.6 4.1 15.4 2.6 14.7 1.4C14 0.4 12.3 0.9 12.7 2.2"/><path d="M15.2 2.6C15.4 5.6 13 7.8 11.4 9.2L11 10.9C10.2 11.6 9.4 11.2 9 10.2C8.3 9.3 7.6 9.6 7.1 10.4C6.5 11.5 5.5 11.5 5 10.4C4.5 9.5 3.7 9.5 3.1 10.4C2.5 11.4 1.5 11.6 1 10.8"/><path d="M4.6 4.2C4.1 6 5.2 7.3 7 6.5"/></g><circle cx="9.7" cy="5.6" r="0.55" fill="#ced0d6"/></svg>
<div class="t" style="left:1590.2px;top:170.9px;font-size:13px;line-height:17px;color:#dfe1e5;letter-spacing:0.202px;">apps</div>
<svg class="abs" style="left:1568.7px;top:195px;" width="16" height="16" viewBox="0 0 16 16"><path d="M6.3 4.5L9.8 8L6.3 11.5" fill="none" stroke="#b4b8bf" stroke-width="1.1" stroke-linecap="round" stroke-linejoin="round"/></svg>
<svg class="abs" style="left:1589.6px;top:195.4px;" width="16" height="16" viewBox="0 0 16 16"><path d="M1.5 12.5V3.5Q1.5 2.5 2.5 2.5H5.6L7.4 4.5H12.5Q13.5 4.5 13.5 5.5V7" fill="none" stroke="#ced0d6" stroke-width="1.1" stroke-linejoin="round" stroke-linecap="round"/><path d="M1.5 12.5Q1.5 13.5 2.5 13.5H7" fill="none" stroke="#ced0d6" stroke-width="1.1" stroke-linecap="round"/><path d="M11.22 8.15A3.7 3.7 0 0 1 12.38 8.15L12.74 8.99A2.96 2.96 0 0 1 13.76 9.58L14.68 9.47A3.7 3.7 0 0 1 15.25 10.47L14.7 11.21A2.96 2.96 0 0 1 14.7 12.39L15.25 13.13A3.7 3.7 0 0 1 14.68 14.13L13.76 14.02A2.96 2.96 0 0 1 12.74 14.61L12.38 15.45A3.7 3.7 0 0 1 11.22 15.45L10.86 14.61A2.96 2.96 0 0 1 9.84 14.02L8.92 14.13A3.7 3.7 0 0 1 8.35 13.13L8.9 12.39A2.96 2.96 0 0 1 8.9 11.21L8.35 10.47A3.7 3.7 0 0 1 8.92 9.47L9.84 9.58A2.96 2.96 0 0 1 10.86 8.99Z" fill="#25324d" stroke="#548af7" stroke-width="1" stroke-linejoin="round"/><circle cx="11.8" cy="11.8" r="1" fill="none" stroke="#548af7" stroke-width="1"/></svg>
<div class="t" style="left:1609.2px;top:194.9px;font-size:13px;line-height:17px;color:#dfe1e5;letter-spacing:0.274px;">Tasks</div>
<svg class="abs" style="left:1568.7px;top:219px;" width="16" height="16" viewBox="0 0 16 16"><path d="M6.3 4.5L9.8 8L6.3 11.5" fill="none" stroke="#b4b8bf" stroke-width="1.1" stroke-linecap="round" stroke-linejoin="round"/></svg>
<svg class="abs" style="left:1589.9px;top:220.8px;" width="16" height="12" viewBox="0 0 16 12"><g fill="none" stroke="#ced0d6" stroke-width="1" stroke-linecap="round" stroke-linejoin="round"><path d="M1 10.8C0.4 7.3 1.8 3.3 6 2.7C8.8 2.3 11 3.5 12.6 3.8C14.6 4.1 15.4 2.6 14.7 1.4C14 0.4 12.3 0.9 12.7 2.2"/><path d="M15.2 2.6C15.4 5.6 13 7.8 11.4 9.2L11 10.9C10.2 11.6 9.4 11.2 9 10.2C8.3 9.3 7.6 9.6 7.1 10.4C6.5 11.5 5.5 11.5 5 10.4C4.5 9.5 3.7 9.5 3.1 10.4C2.5 11.4 1.5 11.6 1 10.8"/><path d="M4.6 4.2C4.1 6 5.2 7.3 7 6.5"/></g><circle cx="9.7" cy="5.6" r="0.55" fill="#ced0d6"/></svg>
<div class="t" style="left:1609.2px;top:218.9px;font-size:13px;line-height:17px;color:#dfe1e5;letter-spacing:0.013px;">aiSample</div>
<svg class="abs" style="left:1568.7px;top:243px;" width="16" height="16" viewBox="0 0 16 16"><path d="M6.3 4.5L9.8 8L6.3 11.5" fill="none" stroke="#b4b8bf" stroke-width="1.1" stroke-linecap="round" stroke-linejoin="round"/></svg>
<svg class="abs" style="left:1589.9px;top:244.8px;" width="16" height="12" viewBox="0 0 16 12"><g fill="none" stroke="#ced0d6" stroke-width="1" stroke-linecap="round" stroke-linejoin="round"><path d="M1 10.8C0.4 7.3 1.8 3.3 6 2.7C8.8 2.3 11 3.5 12.6 3.8C14.6 4.1 15.4 2.6 14.7 1.4C14 0.4 12.3 0.9 12.7 2.2"/><path d="M15.2 2.6C15.4 5.6 13 7.8 11.4 9.2L11 10.9C10.2 11.6 9.4 11.2 9 10.2C8.3 9.3 7.6 9.6 7.1 10.4C6.5 11.5 5.5 11.5 5 10.4C4.5 9.5 3.7 9.5 3.1 10.4C2.5 11.4 1.5 11.6 1 10.8"/><path d="M4.6 4.2C4.1 6 5.2 7.3 7 6.5"/></g><circle cx="9.7" cy="5.6" r="0.55" fill="#ced0d6"/></svg>
<div class="t" style="left:1609.2px;top:242.9px;font-size:13px;line-height:17px;color:#dfe1e5;letter-spacing:0.508px;">animatedMascot</div>
<svg class="abs" style="left:1568.7px;top:267px;" width="16" height="16" viewBox="0 0 16 16"><path d="M6.3 4.5L9.8 8L6.3 11.5" fill="none" stroke="#b4b8bf" stroke-width="1.1" stroke-linecap="round" stroke-linejoin="round"/></svg>
<svg class="abs" style="left:1589.9px;top:268.8px;" width="16" height="12" viewBox="0 0 16 12"><g fill="none" stroke="#ced0d6" stroke-width="1" stroke-linecap="round" stroke-linejoin="round"><path d="M1 10.8C0.4 7.3 1.8 3.3 6 2.7C8.8 2.3 11 3.5 12.6 3.8C14.6 4.1 15.4 2.6 14.7 1.4C14 0.4 12.3 0.9 12.7 2.2"/><path d="M15.2 2.6C15.4 5.6 13 7.8 11.4 9.2L11 10.9C10.2 11.6 9.4 11.2 9 10.2C8.3 9.3 7.6 9.6 7.1 10.4C6.5 11.5 5.5 11.5 5 10.4C4.5 9.5 3.7 9.5 3.1 10.4C2.5 11.4 1.5 11.6 1 10.8"/><path d="M4.6 4.2C4.1 6 5.2 7.3 7 6.5"/></g><circle cx="9.7" cy="5.6" r="0.55" fill="#ced0d6"/></svg>
<div class="t" style="left:1609.2px;top:266.9px;font-size:13px;line-height:17px;color:#dfe1e5;letter-spacing:0.366px;">HelloWorld</div>
<svg class="abs" style="left:1569.2px;top:291px;" width="16" height="16" viewBox="0 0 16 16"><path d="M4.5 6.3L8 9.8L11.5 6.3" fill="none" stroke="#b4b8bf" stroke-width="1.1" stroke-linecap="round" stroke-linejoin="round"/></svg>
<svg class="abs" style="left:1589.9px;top:292.8px;" width="16" height="12" viewBox="0 0 16 12"><g fill="none" stroke="#ced0d6" stroke-width="1" stroke-linecap="round" stroke-linejoin="round"><path d="M1 10.8C0.4 7.3 1.8 3.3 6 2.7C8.8 2.3 11 3.5 12.6 3.8C14.6 4.1 15.4 2.6 14.7 1.4C14 0.4 12.3 0.9 12.7 2.2"/><path d="M15.2 2.6C15.4 5.6 13 7.8 11.4 9.2L11 10.9C10.2 11.6 9.4 11.2 9 10.2C8.3 9.3 7.6 9.6 7.1 10.4C6.5 11.5 5.5 11.5 5 10.4C4.5 9.5 3.7 9.5 3.1 10.4C2.5 11.4 1.5 11.6 1 10.8"/><path d="M4.6 4.2C4.1 6 5.2 7.3 7 6.5"/></g><circle cx="9.7" cy="5.6" r="0.55" fill="#ced0d6"/></svg>
<div class="t" style="left:1609.2px;top:290.9px;font-size:13px;line-height:17px;color:#dfe1e5;letter-spacing:0.19px;">simpleGFX</div>
<svg class="abs" style="left:1588.2px;top:315px;" width="16" height="16" viewBox="0 0 16 16"><path d="M4.5 6.3L8 9.8L11.5 6.3" fill="none" stroke="#b4b8bf" stroke-width="1.1" stroke-linecap="round" stroke-linejoin="round"/></svg>
<svg class="abs" style="left:1608.6px;top:315.4px;" width="16" height="16" viewBox="0 0 16 16"><path d="M1.5 12.5V3.5Q1.5 2.5 2.5 2.5H5.6L7.4 4.5H12.5Q13.5 4.5 13.5 5.5V7" fill="none" stroke="#ced0d6" stroke-width="1.1" stroke-linejoin="round" stroke-linecap="round"/><path d="M1.5 12.5Q1.5 13.5 2.5 13.5H7" fill="none" stroke="#ced0d6" stroke-width="1.1" stroke-linecap="round"/><path d="M11.22 8.15A3.7 3.7 0 0 1 12.38 8.15L12.74 8.99A2.96 2.96 0 0 1 13.76 9.58L14.68 9.47A3.7 3.7 0 0 1 15.25 10.47L14.7 11.21A2.96 2.96 0 0 1 14.7 12.39L15.25 13.13A3.7 3.7 0 0 1 14.68 14.13L13.76 14.02A2.96 2.96 0 0 1 12.74 14.61L12.38 15.45A3.7 3.7 0 0 1 11.22 15.45L10.86 14.61A2.96 2.96 0 0 1 9.84 14.02L8.92 14.13A3.7 3.7 0 0 1 8.35 13.13L8.9 12.39A2.96 2.96 0 0 1 8.9 11.21L8.35 10.47A3.7 3.7 0 0 1 8.92 9.47L9.84 9.58A2.96 2.96 0 0 1 10.86 8.99Z" fill="#25324d" stroke="#548af7" stroke-width="1" stroke-linejoin="round"/><circle cx="11.8" cy="11.8" r="1" fill="none" stroke="#548af7" stroke-width="1"/></svg>
<div class="t" style="left:1628.2px;top:314.9px;font-size:13px;line-height:17px;color:#dfe1e5;letter-spacing:0.274px;">Tasks</div>
<svg class="abs" style="left:1606.7px;top:339px;" width="16" height="16" viewBox="0 0 16 16"><path d="M6.3 4.5L9.8 8L6.3 11.5" fill="none" stroke="#b4b8bf" stroke-width="1.1" stroke-linecap="round" stroke-linejoin="round"/></svg>
<svg class="abs" style="left:1627.6px;top:339.4px;" width="16" height="16" viewBox="0 0 16 16"><path d="M1.5 12.5V3.5Q1.5 2.5 2.5 2.5H5.6L7.4 4.5H12.5Q13.5 4.5 13.5 5.5V7" fill="none" stroke="#ced0d6" stroke-width="1.1" stroke-linejoin="round" stroke-linecap="round"/><path d="M1.5 12.5Q1.5 13.5 2.5 13.5H7" fill="none" stroke="#ced0d6" stroke-width="1.1" stroke-linecap="round"/><path d="M11.22 8.15A3.7 3.7 0 0 1 12.38 8.15L12.74 8.99A2.96 2.96 0 0 1 13.76 9.58L14.68 9.47A3.7 3.7 0 0 1 15.25 10.47L14.7 11.21A2.96 2.96 0 0 1 14.7 12.39L15.25 13.13A3.7 3.7 0 0 1 14.68 14.13L13.76 14.02A2.96 2.96 0 0 1 12.74 14.61L12.38 15.45A3.7 3.7 0 0 1 11.22 15.45L10.86 14.61A2.96 2.96 0 0 1 9.84 14.02L8.92 14.13A3.7 3.7 0 0 1 8.35 13.13L8.9 12.39A2.96 2.96 0 0 1 8.9 11.21L8.35 10.47A3.7 3.7 0 0 1 8.92 9.47L9.84 9.58A2.96 2.96 0 0 1 10.86 8.99Z" fill="#25324d" stroke="#548af7" stroke-width="1" stroke-linejoin="round"/><circle cx="11.8" cy="11.8" r="1" fill="none" stroke="#548af7" stroke-width="1"/></svg>
<div class="t" style="left:1647.2px;top:338.9px;font-size:13px;line-height:17px;color:#dfe1e5;letter-spacing:0.306px;">build</div>
<svg class="abs" style="left:1606.7px;top:363px;" width="16" height="16" viewBox="0 0 16 16"><path d="M6.3 4.5L9.8 8L6.3 11.5" fill="none" stroke="#b4b8bf" stroke-width="1.1" stroke-linecap="round" stroke-linejoin="round"/></svg>
<svg class="abs" style="left:1627.6px;top:363.4px;" width="16" height="16" viewBox="0 0 16 16"><path d="M1.5 12.5V3.5Q1.5 2.5 2.5 2.5H5.6L7.4 4.5H12.5Q13.5 4.5 13.5 5.5V7" fill="none" stroke="#ced0d6" stroke-width="1.1" stroke-linejoin="round" stroke-linecap="round"/><path d="M1.5 12.5Q1.5 13.5 2.5 13.5H7" fill="none" stroke="#ced0d6" stroke-width="1.1" stroke-linecap="round"/><path d="M11.22 8.15A3.7 3.7 0 0 1 12.38 8.15L12.74 8.99A2.96 2.96 0 0 1 13.76 9.58L14.68 9.47A3.7 3.7 0 0 1 15.25 10.47L14.7 11.21A2.96 2.96 0 0 1 14.7 12.39L15.25 13.13A3.7 3.7 0 0 1 14.68 14.13L13.76 14.02A2.96 2.96 0 0 1 12.74 14.61L12.38 15.45A3.7 3.7 0 0 1 11.22 15.45L10.86 14.61A2.96 2.96 0 0 1 9.84 14.02L8.92 14.13A3.7 3.7 0 0 1 8.35 13.13L8.9 12.39A2.96 2.96 0 0 1 8.9 11.21L8.35 10.47A3.7 3.7 0 0 1 8.92 9.47L9.84 9.58A2.96 2.96 0 0 1 10.86 8.99Z" fill="#25324d" stroke="#548af7" stroke-width="1" stroke-linejoin="round"/><circle cx="11.8" cy="11.8" r="1" fill="none" stroke="#548af7" stroke-width="1"/></svg>
<div class="t" style="left:1647.2px;top:362.9px;font-size:13px;line-height:17px;color:#dfe1e5;letter-spacing:0.571px;">documentation</div>
<svg class="abs" style="left:1606.7px;top:387px;" width="16" height="16" viewBox="0 0 16 16"><path d="M6.3 4.5L9.8 8L6.3 11.5" fill="none" stroke="#b4b8bf" stroke-width="1.1" stroke-linecap="round" stroke-linejoin="round"/></svg>
<svg class="abs" style="left:1627.6px;top:387.4px;" width="16" height="16" viewBox="0 0 16 16"><path d="M1.5 12.5V3.5Q1.5 2.5 2.5 2.5H5.6L7.4 4.5H12.5Q13.5 4.5 13.5 5.5V7" fill="none" stroke="#ced0d6" stroke-width="1.1" stroke-linejoin="round" stroke-linecap="round"/><path d="M1.5 12.5Q1.5 13.5 2.5 13.5H7" fill="none" stroke="#ced0d6" stroke-width="1.1" stroke-linecap="round"/><path d="M11.22 8.15A3.7 3.7 0 0 1 12.38 8.15L12.74 8.99A2.96 2.96 0 0 1 13.76 9.58L14.68 9.47A3.7 3.7 0 0 1 15.25 10.47L14.7 11.21A2.96 2.96 0 0 1 14.7 12.39L15.25 13.13A3.7 3.7 0 0 1 14.68 14.13L13.76 14.02A2.96 2.96 0 0 1 12.74 14.61L12.38 15.45A3.7 3.7 0 0 1 11.22 15.45L10.86 14.61A2.96 2.96 0 0 1 9.84 14.02L8.92 14.13A3.7 3.7 0 0 1 8.35 13.13L8.9 12.39A2.96 2.96 0 0 1 8.9 11.21L8.35 10.47A3.7 3.7 0 0 1 8.92 9.47L9.84 9.58A2.96 2.96 0 0 1 10.86 8.99Z" fill="#25324d" stroke="#548af7" stroke-width="1" stroke-linejoin="round"/><circle cx="11.8" cy="11.8" r="1" fill="none" stroke="#548af7" stroke-width="1"/></svg>
<div class="t" style="left:1647.2px;top:386.9px;font-size:13px;line-height:17px;color:#dfe1e5;letter-spacing:0.48px;">help</div>
<svg class="abs" style="left:1607.2px;top:411px;" width="16" height="16" viewBox="0 0 16 16"><path d="M4.5 6.3L8 9.8L11.5 6.3" fill="none" stroke="#b4b8bf" stroke-width="1.1" stroke-linecap="round" stroke-linejoin="round"/></svg>
<svg class="abs" style="left:1627.6px;top:411.4px;" width="16" height="16" viewBox="0 0 16 16"><path d="M1.5 12.5V3.5Q1.5 2.5 2.5 2.5H5.6L7.4 4.5H12.5Q13.5 4.5 13.5 5.5V7" fill="none" stroke="#ced0d6" stroke-width="1.1" stroke-linejoin="round" stroke-linecap="round"/><path d="M1.5 12.5Q1.5 13.5 2.5 13.5H7" fill="none" stroke="#ced0d6" stroke-width="1.1" stroke-linecap="round"/><path d="M11.22 8.15A3.7 3.7 0 0 1 12.38 8.15L12.74 8.99A2.96 2.96 0 0 1 13.76 9.58L14.68 9.47A3.7 3.7 0 0 1 15.25 10.47L14.7 11.21A2.96 2.96 0 0 1 14.7 12.39L15.25 13.13A3.7 3.7 0 0 1 14.68 14.13L13.76 14.02A2.96 2.96 0 0 1 12.74 14.61L12.38 15.45A3.7 3.7 0 0 1 11.22 15.45L10.86 14.61A2.96 2.96 0 0 1 9.84 14.02L8.92 14.13A3.7 3.7 0 0 1 8.35 13.13L8.9 12.39A2.96 2.96 0 0 1 8.9 11.21L8.35 10.47A3.7 3.7 0 0 1 8.92 9.47L9.84 9.58A2.96 2.96 0 0 1 10.86 8.99Z" fill="#25324d" stroke="#548af7" stroke-width="1" stroke-linejoin="round"/><circle cx="11.8" cy="11.8" r="1" fill="none" stroke="#548af7" stroke-width="1"/></svg>
<div class="t" style="left:1647.2px;top:410.9px;font-size:13px;line-height:17px;color:#dfe1e5;letter-spacing:0.386px;">microej</div>
<svg class="abs" style="left:1647.4px;top:435px;" width="16" height="16" viewBox="0 0 16 16"><path d="M7.01 1.78A6.3 6.3 0 0 1 8.99 1.78L9.61 3.22A5.04 5.04 0 0 1 11.33 4.22L12.9 4.04A6.3 6.3 0 0 1 13.88 5.74L12.94 7A5.04 5.04 0 0 1 12.94 9L13.88 10.26A6.3 6.3 0 0 1 12.9 11.96L11.33 11.78A5.04 5.04 0 0 1 9.61 12.78L8.99 14.22A6.3 6.3 0 0 1 7.01 14.22L6.39 12.78A5.04 5.04 0 0 1 4.67 11.78L3.1 11.96A6.3 6.3 0 0 1 2.12 10.26L3.06 9A5.04 5.04 0 0 1 3.06 7L2.12 5.74A6.3 6.3 0 0 1 3.1 4.04L4.67 4.22A5.04 5.04 0 0 1 6.39 3.22Z" fill="none" stroke="#ced0d6" stroke-width="1.1" stroke-linejoin="round"/><circle cx="8" cy="8" r="2.1" fill="none" stroke="#ced0d6" stroke-width="1.1"/></svg>
<div class="t" style="left:1666.4px;top:434.9px;font-size:13px;line-height:17px;color:#dfe1e5;letter-spacing:0.414px;">buildExecutable</div>
<svg class="abs" style="left:1647.4px;top:459px;" width="16" height="16" viewBox="0 0 16 16"><path d="M7.01 1.78A6.3 6.3 0 0 1 8.99 1.78L9.61 3.22A5.04 5.04 0 0 1 11.33 4.22L12.9 4.04A6.3 6.3 0 0 1 13.88 5.74L12.94 7A5.04 5.04 0 0 1 12.94 9L13.88 10.26A6.3 6.3 0 0 1 12.9 11.96L11.33 11.78A5.04 5.04 0 0 1 9.61 12.78L8.99 14.22A6.3 6.3 0 0 1 7.01 14.22L6.39 12.78A5.04 5.04 0 0 1 4.67 11.78L3.1 11.96A6.3 6.3 0 0 1 2.12 10.26L3.06 9A5.04 5.04 0 0 1 3.06 7L2.12 5.74A6.3 6.3 0 0 1 3.1 4.04L4.67 4.22A5.04 5.04 0 0 1 6.39 3.22Z" fill="none" stroke="#ced0d6" stroke-width="1.1" stroke-linejoin="round"/><circle cx="8" cy="8" r="2.1" fill="none" stroke="#ced0d6" stroke-width="1.1"/></svg>
<div class="t" style="left:1666.4px;top:458.9px;font-size:13px;line-height:17px;color:#dfe1e5;letter-spacing:0.477px;">buildFeature</div>
<svg class="abs" style="left:1647.4px;top:483px;" width="16" height="16" viewBox="0 0 16 16"><path d="M7.01 1.78A6.3 6.3 0 0 1 8.99 1.78L9.61 3.22A5.04 5.04 0 0 1 11.33 4.22L12.9 4.04A6.3 6.3 0 0 1 13.88 5.74L12.94 7A5.04 5.04 0 0 1 12.94 9L13.88 10.26A6.3 6.3 0 0 1 12.9 11.96L11.33 11.78A5.04 5.04 0 0 1 9.61 12.78L8.99 14.22A6.3 6.3 0 0 1 7.01 14.22L6.39 12.78A5.04 5.04 0 0 1 4.67 11.78L3.1 11.96A6.3 6.3 0 0 1 2.12 10.26L3.06 9A5.04 5.04 0 0 1 3.06 7L2.12 5.74A6.3 6.3 0 0 1 3.1 4.04L4.67 4.22A5.04 5.04 0 0 1 6.39 3.22Z" fill="none" stroke="#ced0d6" stroke-width="1.1" stroke-linejoin="round"/><circle cx="8" cy="8" r="2.1" fill="none" stroke="#ced0d6" stroke-width="1.1"/></svg>
<div class="t" style="left:1666.4px;top:482.9px;font-size:13px;line-height:17px;color:#dfe1e5;letter-spacing:0.347px;">buildFeatureFromWPK</div>
<svg class="abs" style="left:1647.4px;top:507px;" width="16" height="16" viewBox="0 0 16 16"><path d="M7.01 1.78A6.3 6.3 0 0 1 8.99 1.78L9.61 3.22A5.04 5.04 0 0 1 11.33 4.22L12.9 4.04A6.3 6.3 0 0 1 13.88 5.74L12.94 7A5.04 5.04 0 0 1 12.94 9L13.88 10.26A6.3 6.3 0 0 1 12.9 11.96L11.33 11.78A5.04 5.04 0 0 1 9.61 12.78L8.99 14.22A6.3 6.3 0 0 1 7.01 14.22L6.39 12.78A5.04 5.04 0 0 1 4.67 11.78L3.1 11.96A6.3 6.3 0 0 1 2.12 10.26L3.06 9A5.04 5.04 0 0 1 3.06 7L2.12 5.74A6.3 6.3 0 0 1 3.1 4.04L4.67 4.22A5.04 5.04 0 0 1 6.39 3.22Z" fill="none" stroke="#ced0d6" stroke-width="1.1" stroke-linejoin="round"/><circle cx="8" cy="8" r="2.1" fill="none" stroke="#ced0d6" stroke-width="1.1"/></svg>
<div class="t" style="left:1666.4px;top:506.9px;font-size:13px;line-height:17px;color:#dfe1e5;letter-spacing:0.399px;">buildVirtualDevice</div>
<svg class="abs" style="left:1647.4px;top:531px;" width="16" height="16" viewBox="0 0 16 16"><path d="M7.01 1.78A6.3 6.3 0 0 1 8.99 1.78L9.61 3.22A5.04 5.04 0 0 1 11.33 4.22L12.9 4.04A6.3 6.3 0 0 1 13.88 5.74L12.94 7A5.04 5.04 0 0 1 12.94 9L13.88 10.26A6.3 6.3 0 0 1 12.9 11.96L11.33 11.78A5.04 5.04 0 0 1 9.61 12.78L8.99 14.22A6.3 6.3 0 0 1 7.01 14.22L6.39 12.78A5.04 5.04 0 0 1 4.67 11.78L3.1 11.96A6.3 6.3 0 0 1 2.12 10.26L3.06 9A5.04 5.04 0 0 1 3.06 7L2.12 5.74A6.3 6.3 0 0 1 3.1 4.04L4.67 4.22A5.04 5.04 0 0 1 6.39 3.22Z" fill="none" stroke="#ced0d6" stroke-width="1.1" stroke-linejoin="round"/><circle cx="8" cy="8" r="2.1" fill="none" stroke="#ced0d6" stroke-width="1.1"/></svg>
<div class="t" style="left:1666.4px;top:530.9px;font-size:13px;line-height:17px;color:#dfe1e5;letter-spacing:0.115px;">buildWPK</div>
<svg class="abs" style="left:1647.4px;top:555px;" width="16" height="16" viewBox="0 0 16 16"><path d="M7.01 1.78A6.3 6.3 0 0 1 8.99 1.78L9.61 3.22A5.04 5.04 0 0 1 11.33 4.22L12.9 4.04A6.3 6.3 0 0 1 13.88 5.74L12.94 7A5.04 5.04 0 0 1 12.94 9L13.88 10.26A6.3 6.3 0 0 1 12.9 11.96L11.33 11.78A5.04 5.04 0 0 1 9.61 12.78L8.99 14.22A6.3 6.3 0 0 1 7.01 14.22L6.39 12.78A5.04 5.04 0 0 1 4.67 11.78L3.1 11.96A6.3 6.3 0 0 1 2.12 10.26L3.06 9A5.04 5.04 0 0 1 3.06 7L2.12 5.74A6.3 6.3 0 0 1 3.1 4.04L4.67 4.22A5.04 5.04 0 0 1 6.39 3.22Z" fill="none" stroke="#ced0d6" stroke-width="1.1" stroke-linejoin="round"/><circle cx="8" cy="8" r="2.1" fill="none" stroke="#ced0d6" stroke-width="1.1"/></svg>
<div class="t" style="left:1666.4px;top:554.9px;font-size:13px;line-height:17px;color:#dfe1e5;letter-spacing:0.661px;">execTool</div>
<svg class="abs" style="left:1647.4px;top:579px;" width="16" height="16" viewBox="0 0 16 16"><path d="M7.01 1.78A6.3 6.3 0 0 1 8.99 1.78L9.61 3.22A5.04 5.04 0 0 1 11.33 4.22L12.9 4.04A6.3 6.3 0 0 1 13.88 5.74L12.94 7A5.04 5.04 0 0 1 12.94 9L13.88 10.26A6.3 6.3 0 0 1 12.9 11.96L11.33 11.78A5.04 5.04 0 0 1 9.61 12.78L8.99 14.22A6.3 6.3 0 0 1 7.01 14.22L6.39 12.78A5.04 5.04 0 0 1 4.67 11.78L3.1 11.96A6.3 6.3 0 0 1 2.12 10.26L3.06 9A5.04 5.04 0 0 1 3.06 7L2.12 5.74A6.3 6.3 0 0 1 3.1 4.04L4.67 4.22A5.04 5.04 0 0 1 6.39 3.22Z" fill="none" stroke="#ced0d6" stroke-width="1.1" stroke-linejoin="round"/><circle cx="8" cy="8" r="2.1" fill="none" stroke="#ced0d6" stroke-width="1.1"/></svg>
<div class="t" style="left:1666.4px;top:578.9px;font-size:13px;line-height:17px;color:#dfe1e5;letter-spacing:0.376px;">runOnDevice</div>
<div class="abs" style="left:1531px;top:599px;width:336px;height:24px;background:#43454a;border-radius:5px"></div>
<svg class="abs" style="left:1647.4px;top:603px;" width="16" height="16" viewBox="0 0 16 16"><path d="M7.01 1.78A6.3 6.3 0 0 1 8.99 1.78L9.61 3.22A5.04 5.04 0 0 1 11.33 4.22L12.9 4.04A6.3 6.3 0 0 1 13.88 5.74L12.94 7A5.04 5.04 0 0 1 12.94 9L13.88 10.26A6.3 6.3 0 0 1 12.9 11.96L11.33 11.78A5.04 5.04 0 0 1 9.61 12.78L8.99 14.22A6.3 6.3 0 0 1 7.01 14.22L6.39 12.78A5.04 5.04 0 0 1 4.67 11.78L3.1 11.96A6.3 6.3 0 0 1 2.12 10.26L3.06 9A5.04 5.04 0 0 1 3.06 7L2.12 5.74A6.3 6.3 0 0 1 3.1 4.04L4.67 4.22A5.04 5.04 0 0 1 6.39 3.22Z" fill="none" stroke="#ced0d6" stroke-width="1.1" stroke-linejoin="round"/><circle cx="8" cy="8" r="2.1" fill="none" stroke="#ced0d6" stroke-width="1.1"/></svg>
<div class="t" style="left:1666.4px;top:602.9px;font-size:13px;line-height:17px;color:#dfe1e5;letter-spacing:0.383px;">runOnSimulator</div>
<svg class="abs" style="left:1606.7px;top:627px;" width="16" height="16" viewBox="0 0 16 16"><path d="M6.3 4.5L9.8 8L6.3 11.5" fill="none" stroke="#b4b8bf" stroke-width="1.1" stroke-linecap="round" stroke-linejoin="round"/></svg>
<svg class="abs" style="left:1627.6px;top:627.4px;" width="16" height="16" viewBox="0 0 16 16"><path d="M1.5 12.5V3.5Q1.5 2.5 2.5 2.5H5.6L7.4 4.5H12.5Q13.5 4.5 13.5 5.5V7" fill="none" stroke="#ced0d6" stroke-width="1.1" stroke-linejoin="round" stroke-linecap="round"/><path d="M1.5 12.5Q1.5 13.5 2.5 13.5H7" fill="none" stroke="#ced0d6" stroke-width="1.1" stroke-linecap="round"/><path d="M11.22 8.15A3.7 3.7 0 0 1 12.38 8.15L12.74 8.99A2.96 2.96 0 0 1 13.76 9.58L14.68 9.47A3.7 3.7 0 0 1 15.25 10.47L14.7 11.21A2.96 2.96 0 0 1 14.7 12.39L15.25 13.13A3.7 3.7 0 0 1 14.68 14.13L13.76 14.02A2.96 2.96 0 0 1 12.74 14.61L12.38 15.45A3.7 3.7 0 0 1 11.22 15.45L10.86 14.61A2.96 2.96 0 0 1 9.84 14.02L8.92 14.13A3.7 3.7 0 0 1 8.35 13.13L8.9 12.39A2.96 2.96 0 0 1 8.9 11.21L8.35 10.47A3.7 3.7 0 0 1 8.92 9.47L9.84 9.58A2.96 2.96 0 0 1 10.86 8.99Z" fill="#25324d" stroke="#548af7" stroke-width="1" stroke-linejoin="round"/><circle cx="11.8" cy="11.8" r="1" fill="none" stroke="#548af7" stroke-width="1"/></svg>
<div class="t" style="left:1647.2px;top:626.9px;font-size:13px;line-height:17px;color:#dfe1e5;letter-spacing:0.774px;">other</div>
<svg class="abs" style="left:1606.7px;top:651px;" width="16" height="16" viewBox="0 0 16 16"><path d="M6.3 4.5L9.8 8L6.3 11.5" fill="none" stroke="#b4b8bf" stroke-width="1.1" stroke-linecap="round" stroke-linejoin="round"/></svg>
<svg class="abs" style="left:1627.6px;top:651.4px;" width="16" height="16" viewBox="0 0 16 16"><path d="M1.5 12.5V3.5Q1.5 2.5 2.5 2.5H5.6L7.4 4.5H12.5Q13.5 4.5 13.5 5.5V7" fill="none" stroke="#ced0d6" stroke-width="1.1" stroke-linejoin="round" stroke-linecap="round"/><path d="M1.5 12.5Q1.5 13.5 2.5 13.5H7" fill="none" stroke="#ced0d6" stroke-width="1.1" stroke-linecap="round"/><path d="M11.22 8.15A3.7 3.7 0 0 1 12.38 8.15L12.74 8.99A2.96 2.96 0 0 1 13.76 9.58L14.68 9.47A3.7 3.7 0 0 1 15.25 10.47L14.7 11.21A2.96 2.96 0 0 1 14.7 12.39L15.25 13.13A3.7 3.7 0 0 1 14.68 14.13L13.76 14.02A2.96 2.96 0 0 1 12.74 14.61L12.38 15.45A3.7 3.7 0 0 1 11.22 15.45L10.86 14.61A2.96 2.96 0 0 1 9.84 14.02L8.92 14.13A3.7 3.7 0 0 1 8.35 13.13L8.9 12.39A2.96 2.96 0 0 1 8.9 11.21L8.35 10.47A3.7 3.7 0 0 1 8.92 9.47L9.84 9.58A2.96 2.96 0 0 1 10.86 8.99Z" fill="#25324d" stroke="#548af7" stroke-width="1" stroke-linejoin="round"/><circle cx="11.8" cy="11.8" r="1" fill="none" stroke="#548af7" stroke-width="1"/></svg>
<div class="t" style="left:1647.2px;top:650.9px;font-size:13px;line-height:17px;color:#dfe1e5;letter-spacing:0.475px;">publishing</div>
<div class="abs" style="left:1870px;top:116px;width:8px;height:482px;background:rgba(255,255,255,0.17);"></div>
<div class="abs" style="left:5px;top:46px;width:30px;height:30px;background:#4e5157;border-radius:7px"></div>
<svg class="abs" style="left:10px;top:51px;" width="20" height="20" viewBox="0 0 20 20"><path d="M1.7 15.5V4.5Q1.7 3 3.2 3H7L9.3 5.3H16.8Q18.3 5.3 18.3 6.8V15.5Q18.3 17 16.8 17H3.2Q1.7 17 1.7 15.5Z" fill="none" stroke="#ced0d6" stroke-width="1.4" stroke-linecap="round" stroke-linejoin="round"/></svg>
<svg class="abs" style="left:10px;top:91px;" width="20" height="20" viewBox="0 0 20 20"><g fill="none" stroke="#ced0d6" stroke-width="1.4" stroke-linecap="round" stroke-linejoin="round"><circle cx="4.8" cy="4.6" r="2.2"/><circle cx="4.8" cy="15.6" r="2.2"/><circle cx="15.7" cy="15.6" r="2.2"/><path d="M4.8 6.8V13.4"/><path d="M15.7 13.4V7.8Q15.7 5 13 5H10.2"/><path d="M12.3 2.4L9.8 5L12.3 7.6"/></g></svg>
<div class="abs" style="left:8px;top:126px;width:24px;height:1px;background:#43454a;"></div>
<svg class="abs" style="left:10px;top:142px;" width="20" height="20" viewBox="0 0 20 20"><g fill="none" stroke="#ced0d6" stroke-width="1.4" stroke-linecap="round" stroke-linejoin="round"><rect x="2.9" y="2.5" width="5.6" height="5.6" rx="1.3"/><rect x="2.9" y="11.6" width="5.6" height="5.6" rx="1.3"/><rect x="11.6" y="11.6" width="5.6" height="5.6" rx="1.3"/></g></svg>
<div class="abs" style="left:11.6px;top:190.6px;width:3.2px;height:3.2px;border-radius:50%;background:#ced0d6"></div>
<div class="abs" style="left:18.4px;top:190.6px;width:3.2px;height:3.2px;border-radius:50%;background:#ced0d6"></div>
<div class="abs" style="left:25.2px;top:190.6px;width:3.2px;height:3.2px;border-radius:50%;background:#ced0d6"></div>
<svg class="abs" style="left:10px;top:780px;" width="20" height="20" viewBox="0 0 20 20"><g fill="none" stroke="#ced0d6" stroke-width="1.4" stroke-linecap="round" stroke-linejoin="round"><path d="M6 2.7H14L18.3 10L14 17.3H6L1.7 10Z"/><path d="M8 6.6L13.6 10L8 13.4Z"/></g></svg>
<svg class="abs" style="left:10px;top:820px;" width="20" height="20" viewBox="0 0 20 20"><g fill="none" stroke="#ced0d6" stroke-width="1.4" stroke-linecap="round" stroke-linejoin="round"><path d="M1.3 1.3H9.5Q15.8 1.3 18.6 6.9Q15.6 4.7 12.4 4.8V6.8H7.6V4.8H3.8L1.3 5.5Z"/><path d="M7.7 7L7.3 17.6Q7.3 18.6 8.3 18.6H11.2Q12.2 18.6 12.2 17.6L11.8 7"/></g></svg>
<div class="abs" style="left:5px;top:855px;width:30px;height:30px;background:#4e5157;border-radius:7px"></div>
<svg class="abs" style="left:10px;top:860px;" width="20" height="20" viewBox="0 0 20 20"><path d="M3.7 3.5Q3.7 2.2 4.9 2.9L16.4 9.6Q17.3 10.2 16.4 10.8L4.9 17.5Q3.7 18.2 3.7 16.9Z" fill="none" stroke="#ced0d6" stroke-width="1.4" stroke-linecap="round" stroke-linejoin="round"/></svg>
<div class="abs" style="left:22.4px;top:859.3px;width:8px;height:8px;border-radius:50%;background:#5fb865;box-shadow:0 0 0 1px #4e5157"></div>
<svg class="abs" style="left:10px;top:900px;" width="20" height="20" viewBox="0 0 20 20"><g fill="none" stroke="#ced0d6" stroke-width="1.4" stroke-linecap="round" stroke-linejoin="round"><rect x="1.7" y="2.8" width="16.6" height="14.4" rx="2"/><path d="M5.3 7.2L8.4 10L5.3 12.8M10.5 13.3H14.7"/></g></svg>
<svg class="abs" style="left:10px;top:940px;" width="20" height="20" viewBox="0 0 20 20"><g fill="none" stroke="#ced0d6" stroke-width="1.4" stroke-linecap="round" stroke-linejoin="round"><circle cx="10" cy="10" r="8"/><path d="M10 5.6V11"/></g><circle cx="10" cy="13.9" r="1" fill="#ced0d6"/></svg>
<svg class="abs" style="left:10px;top:979px;" width="20" height="20" viewBox="0 0 20 20"><g fill="none" stroke="#ced0d6" stroke-width="1.4" stroke-linecap="round" stroke-linejoin="round"><circle cx="5.4" cy="4.6" r="2.5"/><circle cx="15" cy="6.6" r="2.5"/><path d="M5.4 7.1V18.2"/><path d="M15 9.1Q15 12.8 10.5 12.8Q5.4 12.8 5.4 15.8"/></g></svg>
<svg class="abs" style="left:1890px;top:51px;" width="20" height="20" viewBox="0 0 20 20"><g fill="none" stroke="#ced0d6" stroke-width="1.4" stroke-linecap="round" stroke-linejoin="round"><path d="M2.4 15Q4.9 12.6 4.9 8Q4.9 2.3 10 1.9"/><path d="M15 8.3Q15.1 12.6 17.6 15H2.4"/></g><path d="M7.9 16.9H12.1Q11.5 18.6 10 18.6Q8.5 18.6 7.9 16.9Z" fill="#ced0d6"/></svg>
<div class="abs" style="left:1902.8px;top:50.9px;width:7.4px;height:7.4px;border-radius:50%;background:#db5c5c"></div>
<div class="abs" style="left:1885px;top:86px;width:30px;height:30px;background:#4e5157;border-radius:7px"></div>
<svg class="abs" style="left:1890px;top:93.3px;" width="20" height="15" viewBox="0 0 16 12"><g fill="none" stroke="#dfe1e5" stroke-width="1.05" stroke-linecap="round" stroke-linejoin="round"><path d="M1 10.8C0.4 7.3 1.8 3.3 6 2.7C8.8 2.3 11 3.5 12.6 3.8C14.6 4.1 15.4 2.6 14.7 1.4C14 0.4 12.3 0.9 12.7 2.2"/><path d="M15.2 2.6C15.4 5.6 13 7.8 11.4 9.2L11 10.9C10.2 11.6 9.4 11.2 9 10.2C8.3 9.3 7.6 9.6 7.1 10.4C6.5 11.5 5.5 11.5 5 10.4C4.5 9.5 3.7 9.5 3.1 10.4C2.5 11.4 1.5 11.6 1 10.8"/><path d="M4.6 4.2C4.1 6 5.2 7.3 7 6.5"/></g><circle cx="9.7" cy="5.6" r="0.55" fill="#dfe1e5"/></svg>
<div class="abs" style="left:12px;top:12px;width:16px;height:16px;background:#000;border:1.3px solid #087cfa;border-radius:1.5px"></div>
<svg class="abs" style="left:12px;top:12px;" width="16" height="16" viewBox="0 0 16 16"><g fill="#fff"><rect x="3" y="3.2" width="3.2" height="1.1"/><rect x="4.05" y="3.2" width="1.1" height="5.6"/><rect x="3" y="7.8" width="3.2" height="1.1"/><path d="M9.1 3.2h1.15v4.1c0 1.2-0.7 1.7-1.7 1.7c-0.7 0-1.2-0.3-1.5-0.7l0.75-0.75c0.2 0.25 0.4 0.4 0.7 0.4c0.35 0 0.6-0.2 0.6-0.75z"/><rect x="3" y="11.7" width="6.2" height="1.2"/></g></svg>
<div class="abs" style="left:51px;top:12.55px;width:14px;height:1.3px;background:#ced0d6;border-radius:0.7px"></div>
<div class="abs" style="left:51px;top:17.05px;width:14px;height:1.3px;background:#ced0d6;border-radius:0.7px"></div>
<div class="abs" style="left:51px;top:21.55px;width:14px;height:1.3px;background:#ced0d6;border-radius:0.7px"></div>
<div class="abs" style="left:51px;top:26.05px;width:14px;height:1.3px;background:#ced0d6;border-radius:0.7px"></div>
<svg class="abs" style="left:1173px;top:14.5px;" width="16" height="12" viewBox="0 0 16 12"><g fill="none" stroke="#7f838a" stroke-width="1" stroke-linecap="round" stroke-linejoin="round"><path d="M1 10.8C0.4 7.3 1.8 3.3 6 2.7C8.8 2.3 11 3.5 12.6 3.8C14.6 4.1 15.4 2.6 14.7 1.4C14 0.4 12.3 0.9 12.7 2.2"/><path d="M15.2 2.6C15.4 5.6 13 7.8 11.4 9.2L11 10.9C10.2 11.6 9.4 11.2 9 10.2C8.3 9.3 7.6 9.6 7.1 10.4C6.5 11.5 5.5 11.5 5 10.4C4.5 9.5 3.7 9.5 3.1 10.4C2.5 11.4 1.5 11.6 1 10.8"/><path d="M4.6 4.2C4.1 6 5.2 7.3 7 6.5"/></g><circle cx="9.7" cy="5.6" r="0.55" fill="#7f838a"/></svg>
<div class="abs" style="left:1183.2px;top:11.8px;width:6.2px;height:6.2px;border-radius:50%;background:#5fb865"></div>
<div class="t" style="left:1195.2px;top:11.8px;font-size:13px;line-height:17px;color:#dfe1e5;letter-spacing:0.458px;">nxpvee-mimxrt1170-evk:apps:simpl...mulator]</div>
<svg class="abs" style="left:1479px;top:12px;" width="16" height="16" viewBox="0 0 16 16"><path d="M4.5 6.3L8 9.8L11.5 6.3" fill="none" stroke="#ced0d6" stroke-width="1.1" stroke-linecap="round" stroke-linejoin="round"/></svg>
<div class="abs" style="left:1505px;top:5px;width:30px;height:30px;background:#57965c;border-radius:6px"></div>
<svg class="abs" style="left:1510px;top:10px;" width="20" height="20" viewBox="0 0 20 20"><g fill="none" stroke="#e6f0e7" stroke-width="1.2" stroke-linecap="round" stroke-linejoin="round"><path d="M9.2 15.8A6.2 6.2 0 1 1 15.3 7.6"/><path d="M12.8 3.3L15.5 5.9L12.6 8.2"/><path d="M11.8 11.8L16.8 14.8L11.8 17.8Z"/></g></svg>
<svg class="abs" style="left:1544px;top:10px;" width="20" height="20" viewBox="0 0 20 20"><g fill="none" stroke="#5fb865" stroke-width="1.3" stroke-linecap="round"><ellipse cx="10" cy="11.3" rx="3.6" ry="4.7"/><path d="M7.2 7.2A2.9 2.9 0 0 1 12.8 7.2"/><path d="M6.4 11.3H3.5M16.5 11.3H13.6M6.8 8.6L4.4 6.8M13.2 8.6L15.6 6.8M6.9 14.2L4.5 16M13.1 14.2L15.5 16"/></g></svg>
<div class="abs" style="left:1573px;top:5px;width:30px;height:30px;background:#c94f4f;border-radius:6px"></div>
<div class="abs" style="left:1581.3px;top:13.3px;width:13.4px;height:13.4px;background:transparent;border:1.4px solid #f5e0e0;border-radius:2.5px"></div>
<div class="abs" style="left:1620.7px;top:13px;width:2.6px;height:2.6px;border-radius:50%;background:#ced0d6"></div>
<div class="abs" style="left:1620.7px;top:18.7px;width:2.6px;height:2.6px;border-radius:50%;background:#ced0d6"></div>
<div class="abs" style="left:1620.7px;top:24.4px;width:2.6px;height:2.6px;border-radius:50%;background:#ced0d6"></div>
<svg class="abs" style="left:1666px;top:10px;" width="20" height="20" viewBox="0 0 20 20"><g fill="none" stroke="#ced0d6" stroke-width="1.3" stroke-linecap="round"><circle cx="9.3" cy="5.8" r="3.2"/><path d="M2.8 17.2V16.2A4.7 4.7 0 0 1 7.5 11.5H10.5"/><path d="M15.5 11.7V18.3M12.2 15H18.8"/></g></svg>
<svg class="abs" style="left:1705px;top:10px;" width="20" height="20" viewBox="0 0 20 20"><g fill="none" stroke="#ced0d6" stroke-width="1.4" stroke-linecap="round"><circle cx="9" cy="9" r="6"/><path d="M13.4 13.6L17.6 17.8"/></g></svg>
<svg class="abs" style="left:1744px;top:10px;" width="20" height="20" viewBox="0 0 20 20"><path d="M8.44 3.29A7.4 7.4 0 0 1 10.76 3.29L11.49 4.99A5.92 5.92 0 0 1 13.51 6.16L15.35 5.94A7.4 7.4 0 0 1 16.51 7.95L15.4 9.43A5.92 5.92 0 0 1 15.4 11.77L16.51 13.25A7.4 7.4 0 0 1 15.35 15.26L13.51 15.04A5.92 5.92 0 0 1 11.49 16.21L10.76 17.91A7.4 7.4 0 0 1 8.44 17.91L7.71 16.21A5.92 5.92 0 0 1 5.69 15.04L3.85 15.26A7.4 7.4 0 0 1 2.69 13.25L3.8 11.77A5.92 5.92 0 0 1 3.8 9.43L2.69 7.95A7.4 7.4 0 0 1 3.85 5.94L5.69 6.16A5.92 5.92 0 0 1 7.71 4.99Z" fill="none" stroke="#ced0d6" stroke-width="1.3" stroke-linejoin="round"/><circle cx="9.6" cy="10.6" r="2.4" fill="none" stroke="#ced0d6" stroke-width="1.3"/></svg>
<div class="abs" style="left:1757.4px;top:10.3px;width:7.2px;height:7.2px;border-radius:50%;background:#f2c55c"></div>
<div class="abs" style="left:1796.5px;top:19px;width:11px;height:1px;background:#6f737a;"></div>
<svg class="abs" style="left:1842px;top:13px;" width="14" height="14" viewBox="0 0 14 14"><g fill="none" stroke="#6f737a" stroke-width="1"><rect x="2.5" y="4.5" width="7" height="7" rx="1"/><path d="M4.5 4.5V3.5Q4.5 2.5 5.5 2.5H10.5Q11.5 2.5 11.5 3.5V8.5Q11.5 9.5 10.5 9.5H9.5"/></g></svg>
<svg class="abs" style="left:1889px;top:13px;" width="14" height="14" viewBox="0 0 14 14"><path d="M2 2L12 12M12 2L2 12" stroke="#6f737a" stroke-width="1" fill="none"/></svg>
<div class="abs" style="left:14px;top:1021px;width:8px;height:8px;background:transparent;border:1.3px solid #548af7;border-radius:2px"></div>
<div class="t" style="left:26.2px;top:1016.3px;font-size:13px;line-height:17px;color:#a8adb5;letter-spacing:0.521px;">nxpvee-mimxrt1170-evk</div>
<svg class="abs" style="left:178px;top:1016.3px;" width="16" height="16" viewBox="0 0 16 16"><path d="M6.3 4.5L9.8 8L6.3 11.5" fill="none" stroke="#868a91" stroke-width="1.1" stroke-linecap="round" stroke-linejoin="round"/></svg>
<div class="abs" style="left:199px;top:1021px;width:8px;height:8px;background:transparent;border:1.3px solid #548af7;border-radius:2px"></div>
<div class="t" style="left:211.5px;top:1016.3px;font-size:13px;line-height:17px;color:#a8adb5;letter-spacing:0.202px;">apps</div>
<svg class="abs" style="left:244.3px;top:1016.3px;" width="16" height="16" viewBox="0 0 16 16"><path d="M6.3 4.5L9.8 8L6.3 11.5" fill="none" stroke="#868a91" stroke-width="1.1" stroke-linecap="round" stroke-linejoin="round"/></svg>
<div class="abs" style="left:265px;top:1021px;width:8px;height:8px;background:transparent;border:1.3px solid #548af7;border-radius:2px"></div>
<div class="t" style="left:277.6px;top:1016.3px;font-size:13px;line-height:17px;color:#a8adb5;letter-spacing:0.134px;">simpleGFX</div>
<svg class="abs" style="left:346px;top:1016.3px;" width="16" height="16" viewBox="0 0 16 16"><path d="M6.3 4.5L9.8 8L6.3 11.5" fill="none" stroke="#868a91" stroke-width="1.1" stroke-linecap="round" stroke-linejoin="round"/></svg>
<div class="t" style="left:367.5px;top:1016.3px;font-size:13px;line-height:17px;color:#a8adb5;letter-spacing:0.223px;">src</div>
<svg class="abs" style="left:389px;top:1016.3px;" width="16" height="16" viewBox="0 0 16 16"><path d="M6.3 4.5L9.8 8L6.3 11.5" fill="none" stroke="#868a91" stroke-width="1.1" stroke-linecap="round" stroke-linejoin="round"/></svg>
<div class="abs" style="left:410px;top:1021px;width:8px;height:8px;background:transparent;border:1.3px solid #548af7;border-radius:2px"></div>
<div class="t" style="left:422.4px;top:1016.3px;font-size:13px;line-height:17px;color:#a8adb5;letter-spacing:-0.095px;">main</div>
<svg class="abs" style="left:454.2px;top:1016.3px;" width="16" height="16" viewBox="0 0 16 16"><path d="M6.3 4.5L9.8 8L6.3 11.5" fill="none" stroke="#868a91" stroke-width="1.1" stroke-linecap="round" stroke-linejoin="round"/></svg>
<div class="t" style="left:475.3px;top:1016.3px;font-size:13px;line-height:17px;color:#a8adb5;letter-spacing:-0.012px;">java</div>
<svg class="abs" style="left:502.3px;top:1016.3px;" width="16" height="16" viewBox="0 0 16 16"><path d="M6.3 4.5L9.8 8L6.3 11.5" fill="none" stroke="#868a91" stroke-width="1.1" stroke-linecap="round" stroke-linejoin="round"/></svg>
<div class="t" style="left:523px;top:1016.3px;font-size:13px;line-height:17px;color:#a8adb5;letter-spacing:0.48px;">com</div>
<svg class="abs" style="left:552.7px;top:1016.3px;" width="16" height="16" viewBox="0 0 16 16"><path d="M6.3 4.5L9.8 8L6.3 11.5" fill="none" stroke="#868a91" stroke-width="1.1" stroke-linecap="round" stroke-linejoin="round"/></svg>
<div class="t" style="left:573px;top:1016.3px;font-size:13px;line-height:17px;color:#a8adb5;letter-spacing:0.513px;">nxp</div>
<svg class="abs" style="left:599.5px;top:1016.3px;" width="16" height="16" viewBox="0 0 16 16"><path d="M6.3 4.5L9.8 8L6.3 11.5" fill="none" stroke="#868a91" stroke-width="1.1" stroke-linecap="round" stroke-linejoin="round"/></svg>
<div class="t" style="left:620px;top:1016.3px;font-size:13px;line-height:17px;color:#a8adb5;letter-spacing:0.266px;">example</div>
<svg class="abs" style="left:675px;top:1016.3px;" width="16" height="16" viewBox="0 0 16 16"><path d="M6.3 4.5L9.8 8L6.3 11.5" fill="none" stroke="#868a91" stroke-width="1.1" stroke-linecap="round" stroke-linejoin="round"/></svg>
<div class="t" style="left:696px;top:1016.3px;font-size:13px;line-height:17px;color:#a8adb5;letter-spacing:0.566px;">simplegfx</div>
<svg class="abs" style="left:759.5px;top:1016.3px;" width="16" height="16" viewBox="0 0 16 16"><path d="M6.3 4.5L9.8 8L6.3 11.5" fill="none" stroke="#868a91" stroke-width="1.1" stroke-linecap="round" stroke-linejoin="round"/></svg>
<svg class="abs" style="left:780px;top:1016.5px;" width="16" height="16" viewBox="0 0 16 16"><circle cx="8" cy="8" r="6.5" fill="#25324d" stroke="#548af7" stroke-width="1.2"/><path d="M10.3 6.2A2.9 2.9 0 1 0 10.3 9.8" fill="none" stroke="#548af7" stroke-width="1.2" stroke-linecap="round"/></svg>
<div class="t" style="left:800px;top:1016.3px;font-size:13px;line-height:17px;color:#a8adb5;letter-spacing:0.272px;">SimpleGFXWidget</div>
<svg class="abs" style="left:915px;top:1016.3px;" width="16" height="16" viewBox="0 0 16 16"><path d="M6.3 4.5L9.8 8L6.3 11.5" fill="none" stroke="#868a91" stroke-width="1.1" stroke-linecap="round" stroke-linejoin="round"/></svg>
<svg class="abs" style="left:935px;top:1016.5px;" width="16" height="16" viewBox="0 0 16 16"><circle cx="8" cy="8" r="6.5" fill="#45322b" stroke="#c77d55" stroke-width="1.2"/><path d="M9.8 5.2Q7.6 4.6 7.6 6.8V11.6M6 7.8H9.4" fill="none" stroke="#c77d55" stroke-width="1.2" stroke-linecap="round"/></svg>
<div class="t" style="left:955px;top:1016.3px;font-size:13px;line-height:17px;color:#a8adb5;letter-spacing:-0.33px;">NXP_ORANGE</div>
<div class="t" style="left:1675.3px;top:1016.3px;font-size:13px;line-height:17px;color:#a8adb5;letter-spacing:0.614px;">23:43</div>
<div class="t" style="left:1727.3px;top:1016.3px;font-size:13px;line-height:17px;color:#a8adb5;letter-spacing:-0.686px;">LF</div>
<div class="t" style="left:1758.3px;top:1016.3px;font-size:13px;line-height:17px;color:#a8adb5;letter-spacing:0.474px;">UTF-8</div>
<div class="t" style="left:1814.3px;top:1016.3px;font-size:13px;line-height:17px;color:#a8adb5;letter-spacing:0.371px;">4 spaces</div>
<svg class="abs" style="left:1887.5px;top:1016.5px;" width="16" height="16" viewBox="0 0 16 16"><g fill="none" stroke="#ced0d6" stroke-width="1.2" stroke-linecap="round"><rect x="2" y="7.2" width="9.6" height="6.8" rx="1.5"/><path d="M9 7V5.2Q9 2.7 11.5 2.7Q14 2.7 14 5.2"/></g><rect x="6" y="9.8" width="1.7" height="1.7" fill="#ced0d6"/></svg>
<!-- simulator window -->
<div class="abs" id="sim" style="left:64px;top:5px;width:476px;height:877px;background:#f0f0f0;box-shadow:0 0 0 1px rgba(20,22,28,.55),0 4px 14px rgba(0,0,0,.45);overflow:hidden">
  <div class="abs" style="left:0;top:0;width:476px;height:30px;background:#fff"></div>
  <!-- title icon -->
  <svg class="abs" style="left:10.6px;top:8.7px" width="10.8" height="9.5" viewBox="0 0 12 11" preserveAspectRatio="none"><rect x="0.5" y="0.5" width="11" height="10" fill="#e9f3e4" stroke="#8fd07a"/><rect x="2" y="2.6" width="8" height="3.8" fill="#55585c"/><rect x="3.2" y="3.4" width="1.2" height="2.2" fill="#e8e8e8"/><rect x="5.2" y="3.2" width="1.8" height="2.6" fill="#a9abad"/><rect x="7.8" y="3.4" width="1.2" height="2.2" fill="#e8e8e8"/><rect x="0.5" y="7.6" width="11" height="2.2" fill="#4cb82f"/></svg>
  <div class="abs" style="left:29.7px;top:7.2px;font-size:12.5px;letter-spacing:-0.8px;color:#000;line-height:15px">MIMXRT1170</div>
  <!-- caption buttons -->
  <svg class="abs" style="left:338px;top:0" width="138" height="30" viewBox="0 0 138 30"><g stroke="#000" stroke-width="1" fill="none" shape-rendering="crispEdges"><path d="M19 14.5h10"/><rect x="64.5" y="9.5" width="9" height="9"/></g><path d="M110 9l10 10M120 9l-10 10" stroke="#000" stroke-width="1.1" fill="none"/></svg>
  <!-- toolbar -->
  <div class="abs" style="left:0;top:30px;width:476px;height:25px;background:#f0f0f0"></div>
  <div class="abs" style="left:0;top:55px;width:476px;height:1px;background:#a0a0a0"></div>
  <svg class="abs" style="left:0;top:30px" width="476" height="25" viewBox="0 0 476 25">
    <g fill="#b8b8b8"><rect x="4" y="3" width="1" height="1"/><rect x="4" y="7" width="1" height="1"/><rect x="4" y="11" width="1" height="1"/><rect x="4" y="15" width="1" height="1"/><rect x="4" y="19" width="1" height="1"/></g>
    <!-- zoom out (focused) -->
    <rect x="12.5" y="1.5" width="22" height="21" fill="#cce4f7" stroke="#bddcf4"/>
    <rect x="15.5" y="3.5" width="16" height="16" fill="none" stroke="#000" stroke-width="1" stroke-dasharray="1 1" shape-rendering="crispEdges"/>
    <circle cx="22.8" cy="11" r="5.7" fill="none" stroke="#111" stroke-width="1.5"/><path d="M20 11h5.6" stroke="#111" stroke-width="1.3"/><path d="M27 15.3l3.5 3.4" stroke="#111" stroke-width="1.5"/>
    <!-- 1:1 -->
    <g stroke="#8a8a8a" fill="none"><circle cx="45.5" cy="11" r="6" stroke-width="1.2"/><path d="M50 15.5l3 3" stroke-width="1.3"/><path d="M43.3 8.5v5M47.7 8.5v5" stroke-width="1"/></g><rect x="45" y="9.5" width="1" height="1" fill="#8a8a8a"/><rect x="45" y="12" width="1" height="1" fill="#8a8a8a"/>
    <!-- zoom in -->
    <g stroke="#8a8a8a" fill="none"><circle cx="68.3" cy="11" r="6" stroke-width="1.2"/><path d="M72.8 15.5l3 3" stroke-width="1.3"/><path d="M65.8 11h5M68.3 8.5v5" stroke-width="1.1"/></g>
    <!-- dots selected -->
    <rect x="81.5" y="1.5" width="22" height="21" fill="#c2dcf3" stroke="#90c8f6"/>
    <rect x="104.5" y="1.5" width="22" height="21" fill="#c2dcf3" stroke="#90c8f6"/>
    <circle cx="87.5" cy="7.3" r="2.7" fill="#4f5357"/><circle cx="96.6" cy="11.4" r="2.7" fill="#000"/><circle cx="89.5" cy="16.4" r="2.6" fill="#8e9194"/>
    <!-- checker -->
    <rect x="108" y="5" width="14" height="13.7" fill="#6a6d70"/>
    <g fill="#b5b8ba"><rect x="109" y="6" width="2" height="2"/><rect x="113" y="6" width="2" height="2"/><rect x="117" y="6" width="2" height="2"/><rect x="111" y="8" width="2" height="2"/><rect x="115" y="8" width="2" height="2"/><rect x="119" y="8" width="2" height="2"/><rect x="109" y="10" width="2" height="2"/><rect x="113" y="10" width="2" height="2"/><rect x="117" y="10" width="2" height="2"/><rect x="111" y="12" width="2" height="2"/><rect x="115" y="12" width="2" height="2"/><rect x="119" y="12" width="2" height="2"/><rect x="109" y="14" width="2" height="2"/><rect x="113" y="14" width="2" height="2"/><rect x="117" y="14" width="2" height="2"/><rect x="111" y="16" width="2" height="1.7"/><rect x="115" y="16" width="2" height="1.7"/><rect x="119" y="16" width="2" height="1.7"/></g>
    <rect x="108.5" y="5.5" width="13" height="12.7" fill="none" stroke="#000" stroke-width="1.2"/>
    <!-- separators -->
    <g fill="#7a7a7a"><rect x="128.3" y="3.4" width="1" height="18.5"/><rect x="155" y="3.4" width="1" height="18.5"/><rect x="182" y="3.4" width="1" height="18.5"/></g>
    <!-- cursor arrow -->
    <path d="M135.4 5.8L137 17.6L140.2 14.7L143.2 18.7L145.4 17.4L142.5 13.4L147 12.5Z" fill="#000"/>
    <!-- camera -->
    <path d="M161.6 17.4V9.3h2.3l1.6-2.7h6.6l1.6 2.7h3.3V17.4z" fill="#8a9094" stroke="#000" stroke-width="1.3" stroke-linejoin="round"/><circle cx="168.8" cy="12.9" r="3.2" fill="#4c5155" stroke="#3a3e41" stroke-width="0.8"/><rect x="174.3" y="10.3" width="1.2" height="1.2" fill="#222"/>
    <!-- sliders -->
    <g stroke="#a6a6a6" stroke-width="1.1" fill="#f0f0f0"><path d="M188.5 6.5h13.5M188.5 12.3h13.5M188.5 17.8h13.5"/><circle cx="196.5" cy="6.5" r="1.9"/><circle cx="191.8" cy="12.3" r="1.9"/><circle cx="198.3" cy="17.8" r="1.9"/></g>
  </svg>
  <div class="abs" style="left:0;top:56px;width:1px;height:796px;background:#a3abb5"></div>
  <!-- board -->
  <div class="abs" id="board" style="left:1px;top:56px;width:474px;height:796px;background:#0a9a43;overflow:hidden">
    <!-- left bright green edge -->
    <div class="abs" style="left:0;top:0;width:6px;height:796px;background:linear-gradient(90deg,#7fd9a4 0,#12c768 1px,#00c565 3px,#0aa850 4.5px,#0aa850 6px)"></div>
    <!-- right green edge -->
    <div class="abs" style="left:468px;top:0;width:6px;height:796px;background:linear-gradient(180deg,#0a9a43 0,#0a8d3c 300px,#0b6b2c 796px)"></div>
    <div class="abs" style="left:473px;top:0;width:1px;height:796px;background:linear-gradient(180deg,#8d9aa0,#5f7a6a 200px,#5f7a6a)"></div>
    <!-- bottom green -->
    <div class="abs" style="left:0;top:792px;width:474px;height:4px;background:linear-gradient(90deg,#0ab257,#0a8d3c 30%,#0b7a33)"></div>
    <div class="abs" style="left:20px;top:794px;width:12px;height:2px;background:#a5a84a"></div>
    <!-- top strip: flex cable -->
    <div class="abs" style="left:6px;top:0;width:222px;height:8px;background:linear-gradient(180deg,#4e5350 0,#7d7f78 2px,#9a8a58 3px,#e2a428 4px,#f3b93c 5.5px,#e0a02c 8px)"></div>
    <div class="abs" style="left:5px;top:0;width:16px;height:8px;background:linear-gradient(100deg,#00c060 35%,#d9e27c 62%,#8a8a70 90%)"></div>
    <div class="abs" style="left:84px;top:0.5px;width:5px;height:6px;background:#0b0906"></div>
    <div class="abs" style="left:151px;top:0.5px;width:5px;height:6px;background:#0b0906"></div>
    <div class="abs" style="left:89px;top:0;width:62px;height:3px;background:linear-gradient(180deg,#9cc4ab,#6f8f7a 40%,#7d9a80)"></div>
    <div class="abs" style="left:222px;top:0;width:13px;height:8px;background:linear-gradient(180deg,#6a6f63,#3f4b3c)"></div>
    <!-- pcb right part -->
    <div class="abs" style="left:235px;top:0;width:236px;height:12px;background:#0b9b46"></div>
    <div class="abs" style="left:236px;top:1px;width:7px;height:5px;background:#6c8a6a"></div>
    <div class="abs" style="left:243px;top:1px;width:3px;height:6px;background:#bfe3c8"></div>
    <div class="abs" style="left:249px;top:1px;width:3px;height:6px;background:#a5d6b2"></div>
    <div class="abs" style="left:258px;top:1px;width:5px;height:6px;border:1px solid #cfe9d6;border-left:none"></div>
    <div class="abs" style="left:265px;top:0.5px;width:34px;height:6.5px;background:repeating-linear-gradient(90deg,#2b2a1d 0,#2b2a1d 2px,#b5a95a 2px,#b5a95a 4px,#2b2a1d 4px,#2b2a1d 6.8px)"></div>
    <div class="abs" style="left:302px;top:1px;width:6px;height:6px;border:1px solid #cfe9d6;border-right:none"></div>
    <div class="abs" style="left:318px;top:-3px;width:46px;height:8px;border:1px solid #e6f3ea"></div>
    <div class="abs" style="left:326px;top:1px;width:30px;height:5px;background:#4a4a22;border-radius:3px"></div>
    <div class="abs" style="left:326px;top:1.5px;width:5px;height:4px;border-radius:2px;border:1px solid #b89c3a"></div>
    <div class="abs" style="left:351px;top:1.5px;width:5px;height:4px;border-radius:2px;border:1px solid #b89c3a"></div>
    <div class="abs" style="left:378px;top:1px;width:9px;height:4px;background:#bfe3c8;opacity:.7"></div>
    <div class="abs" style="left:394.5px;top:-13px;width:22px;height:22px;border-radius:11px;background:#2c4a3a;border:1px solid #cfe6d6"></div>
    <div class="abs" style="left:424px;top:-6px;width:19px;height:15px;border-radius:0 0 9px 9px;background:#ece8c8"></div>
    <div class="abs" style="left:452px;top:-9px;width:18px;height:18px;border-radius:9px;background:#c9b04d;border:3px solid #d9d57a"></div>
    <!-- bezel -->
    <div class="abs" style="left:4px;top:4px;width:470px;height:794px;background:#9fb3a3;clip-path:polygon(0.3px 1.5px,468.2px 4px,466px 792px,0.3px 790.3px)"></div>
    <div class="abs" style="left:4px;top:4px;width:470px;height:794px;background:linear-gradient(180deg,#191b20 0,#15171b 120px,#0e0f12 420px,#090a0b 794px);clip-path:polygon(1.1px 2.3px,467.4px 4.8px,465.2px 791.2px,1.1px 789.5px)"></div>
    <div class="abs" style="left:442px;top:52px;width:1px;height:736px;background:rgba(255,255,255,0.1)"></div>
    <!-- screen -->
    <div class="abs" style="left:35px;top:51px;width:404px;height:716px;background:#f7fbf7;overflow:hidden">
      <div class="abs" style="left:0;top:0;width:403px;height:403px;border-radius:50%;background:#aeb2ad"></div>
      <div class="abs" style="left:103px;top:181px;width:56px;height:42px;background:#f60000"></div>
      <div class="abs" style="left:245px;top:181px;width:56px;height:42px;background:#008100"></div>
      <div class="abs" style="left:174px;top:222px;width:56px;height:42px;background:#0000f8"></div>
    </div>
  </div>
  <!-- status -->
  <div class="abs" style="left:0;top:852px;width:476px;height:1px;background:#9a9aa6"></div>
  <div class="abs" style="left:0;top:853px;width:476px;height:24px;background:#f0f0f0"></div>
  <div class="abs" style="left:4.8px;top:858.7px;font-size:11px;color:#55557a;line-height:13px;white-space:pre">Display: 0, 0</div>
  <div class="abs" style="right:8.2px;top:858.7px;font-size:11px;color:#000;line-height:13px;white-space:pre">Zoom: 56%</div>
</div>

</div>
</body>
</html>
